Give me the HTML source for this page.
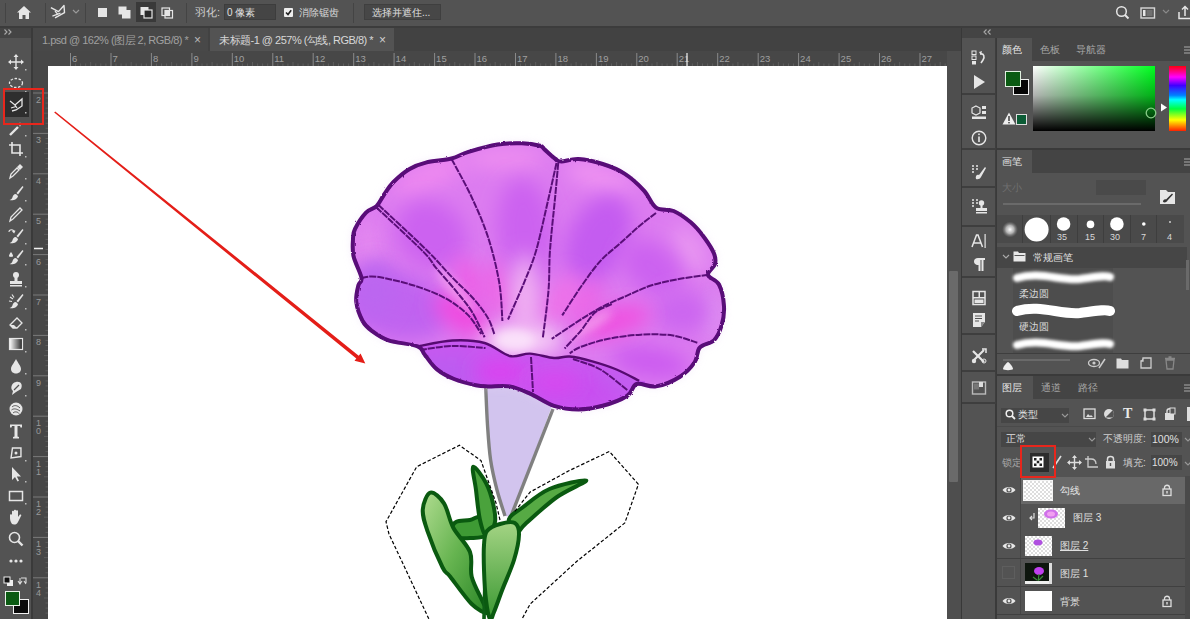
<!DOCTYPE html>
<html><head><meta charset="utf-8">
<style>
*{margin:0;padding:0;box-sizing:border-box}
html,body{width:1190px;height:619px;overflow:hidden;background:#535353;font-family:"Liberation Sans",sans-serif;color:#ddd}
.a{position:absolute}
svg{position:absolute;overflow:visible}
.t{position:absolute;white-space:nowrap;line-height:1}
</style></head><body>
<div class="a" style="left:0;top:0;width:1190px;height:26px;background:#535353"></div>
<div class="a" style="left:0;top:26px;width:1190px;height:2px;background:#3c3c3c"></div>
<div class="a" style="left:0;top:28px;width:32px;height:10px;background:#444"></div>
<div class="a" style="left:0;top:38px;width:32px;height:581px;background:#535353"></div>
<div class="a" style="left:31px;top:28px;width:2px;height:591px;background:#3a3a3a"></div>
<div class="a" style="left:33px;top:28px;width:928px;height:23px;background:#424242"></div>
<div class="a" style="left:33px;top:28px;width:175px;height:23px;background:#484848"></div>
<div class="a" style="left:210px;top:28px;width:184px;height:23px;background:#535353"></div>
<div class="t" style="left:42px;top:35px;font-size:11px;letter-spacing:-0.5px;color:#a0a0a0">1.psd @ 162% (图层 2, RGB/8) *</div>
<div class="t" style="left:194px;top:34px;font-size:12px;color:#b8b8b8">×</div>
<div class="t" style="left:219px;top:35px;font-size:11px;letter-spacing:-0.5px;color:#d8d8d8">未标题-1 @ 257% (勾线, RGB/8) *</div>
<div class="t" style="left:379px;top:34px;font-size:12px;color:#d0d0d0">×</div>
<div class="a" style="left:33px;top:51px;width:915px;height:15px;background:#474747"></div>
<div class="a" style="left:33px;top:66px;width:15px;height:553px;background:#474747"></div>
<svg style="left:0;top:0;width:1190px;height:619px" viewBox="0 0 1190 619">
<line x1="70.5" y1="53" x2="70.5" y2="66" stroke="#8a8a8a" stroke-width="1"/>
<text x="72.0" y="62" font-size="9.5" fill="#a0a0a0" font-family="Liberation Sans">6</text>
<line x1="75.6" y1="63.5" x2="75.6" y2="66" stroke="#5e5e5e" stroke-width="1"/>
<line x1="80.6" y1="63.5" x2="80.6" y2="66" stroke="#5e5e5e" stroke-width="1"/>
<line x1="85.7" y1="63.5" x2="85.7" y2="66" stroke="#5e5e5e" stroke-width="1"/>
<line x1="90.7" y1="62.0" x2="90.7" y2="66" stroke="#5e5e5e" stroke-width="1"/>
<line x1="95.8" y1="63.5" x2="95.8" y2="66" stroke="#5e5e5e" stroke-width="1"/>
<line x1="100.8" y1="63.5" x2="100.8" y2="66" stroke="#5e5e5e" stroke-width="1"/>
<line x1="105.9" y1="63.5" x2="105.9" y2="66" stroke="#5e5e5e" stroke-width="1"/>
<line x1="111.0" y1="53" x2="111.0" y2="66" stroke="#8a8a8a" stroke-width="1"/>
<text x="112.5" y="62" font-size="9.5" fill="#a0a0a0" font-family="Liberation Sans">7</text>
<line x1="116.0" y1="63.5" x2="116.0" y2="66" stroke="#5e5e5e" stroke-width="1"/>
<line x1="121.1" y1="63.5" x2="121.1" y2="66" stroke="#5e5e5e" stroke-width="1"/>
<line x1="126.1" y1="63.5" x2="126.1" y2="66" stroke="#5e5e5e" stroke-width="1"/>
<line x1="131.2" y1="62.0" x2="131.2" y2="66" stroke="#5e5e5e" stroke-width="1"/>
<line x1="136.2" y1="63.5" x2="136.2" y2="66" stroke="#5e5e5e" stroke-width="1"/>
<line x1="141.3" y1="63.5" x2="141.3" y2="66" stroke="#5e5e5e" stroke-width="1"/>
<line x1="146.3" y1="63.5" x2="146.3" y2="66" stroke="#5e5e5e" stroke-width="1"/>
<line x1="151.4" y1="53" x2="151.4" y2="66" stroke="#8a8a8a" stroke-width="1"/>
<text x="152.9" y="62" font-size="9.5" fill="#a0a0a0" font-family="Liberation Sans">8</text>
<line x1="156.5" y1="63.5" x2="156.5" y2="66" stroke="#5e5e5e" stroke-width="1"/>
<line x1="161.5" y1="63.5" x2="161.5" y2="66" stroke="#5e5e5e" stroke-width="1"/>
<line x1="166.6" y1="63.5" x2="166.6" y2="66" stroke="#5e5e5e" stroke-width="1"/>
<line x1="171.6" y1="62.0" x2="171.6" y2="66" stroke="#5e5e5e" stroke-width="1"/>
<line x1="176.7" y1="63.5" x2="176.7" y2="66" stroke="#5e5e5e" stroke-width="1"/>
<line x1="181.7" y1="63.5" x2="181.7" y2="66" stroke="#5e5e5e" stroke-width="1"/>
<line x1="186.8" y1="63.5" x2="186.8" y2="66" stroke="#5e5e5e" stroke-width="1"/>
<line x1="191.9" y1="53" x2="191.9" y2="66" stroke="#8a8a8a" stroke-width="1"/>
<text x="193.4" y="62" font-size="9.5" fill="#a0a0a0" font-family="Liberation Sans">9</text>
<line x1="196.9" y1="63.5" x2="196.9" y2="66" stroke="#5e5e5e" stroke-width="1"/>
<line x1="202.0" y1="63.5" x2="202.0" y2="66" stroke="#5e5e5e" stroke-width="1"/>
<line x1="207.0" y1="63.5" x2="207.0" y2="66" stroke="#5e5e5e" stroke-width="1"/>
<line x1="212.1" y1="62.0" x2="212.1" y2="66" stroke="#5e5e5e" stroke-width="1"/>
<line x1="217.1" y1="63.5" x2="217.1" y2="66" stroke="#5e5e5e" stroke-width="1"/>
<line x1="222.2" y1="63.5" x2="222.2" y2="66" stroke="#5e5e5e" stroke-width="1"/>
<line x1="227.2" y1="63.5" x2="227.2" y2="66" stroke="#5e5e5e" stroke-width="1"/>
<line x1="232.3" y1="53" x2="232.3" y2="66" stroke="#8a8a8a" stroke-width="1"/>
<text x="233.8" y="62" font-size="9.5" fill="#a0a0a0" font-family="Liberation Sans">10</text>
<line x1="237.4" y1="63.5" x2="237.4" y2="66" stroke="#5e5e5e" stroke-width="1"/>
<line x1="242.4" y1="63.5" x2="242.4" y2="66" stroke="#5e5e5e" stroke-width="1"/>
<line x1="247.5" y1="63.5" x2="247.5" y2="66" stroke="#5e5e5e" stroke-width="1"/>
<line x1="252.5" y1="62.0" x2="252.5" y2="66" stroke="#5e5e5e" stroke-width="1"/>
<line x1="257.6" y1="63.5" x2="257.6" y2="66" stroke="#5e5e5e" stroke-width="1"/>
<line x1="262.6" y1="63.5" x2="262.6" y2="66" stroke="#5e5e5e" stroke-width="1"/>
<line x1="267.7" y1="63.5" x2="267.7" y2="66" stroke="#5e5e5e" stroke-width="1"/>
<line x1="272.8" y1="53" x2="272.8" y2="66" stroke="#8a8a8a" stroke-width="1"/>
<text x="274.2" y="62" font-size="9.5" fill="#a0a0a0" font-family="Liberation Sans">11</text>
<line x1="277.8" y1="63.5" x2="277.8" y2="66" stroke="#5e5e5e" stroke-width="1"/>
<line x1="282.9" y1="63.5" x2="282.9" y2="66" stroke="#5e5e5e" stroke-width="1"/>
<line x1="287.9" y1="63.5" x2="287.9" y2="66" stroke="#5e5e5e" stroke-width="1"/>
<line x1="293.0" y1="62.0" x2="293.0" y2="66" stroke="#5e5e5e" stroke-width="1"/>
<line x1="298.0" y1="63.5" x2="298.0" y2="66" stroke="#5e5e5e" stroke-width="1"/>
<line x1="303.1" y1="63.5" x2="303.1" y2="66" stroke="#5e5e5e" stroke-width="1"/>
<line x1="308.1" y1="63.5" x2="308.1" y2="66" stroke="#5e5e5e" stroke-width="1"/>
<line x1="313.2" y1="53" x2="313.2" y2="66" stroke="#8a8a8a" stroke-width="1"/>
<text x="314.7" y="62" font-size="9.5" fill="#a0a0a0" font-family="Liberation Sans">12</text>
<line x1="318.3" y1="63.5" x2="318.3" y2="66" stroke="#5e5e5e" stroke-width="1"/>
<line x1="323.3" y1="63.5" x2="323.3" y2="66" stroke="#5e5e5e" stroke-width="1"/>
<line x1="328.4" y1="63.5" x2="328.4" y2="66" stroke="#5e5e5e" stroke-width="1"/>
<line x1="333.4" y1="62.0" x2="333.4" y2="66" stroke="#5e5e5e" stroke-width="1"/>
<line x1="338.5" y1="63.5" x2="338.5" y2="66" stroke="#5e5e5e" stroke-width="1"/>
<line x1="343.5" y1="63.5" x2="343.5" y2="66" stroke="#5e5e5e" stroke-width="1"/>
<line x1="348.6" y1="63.5" x2="348.6" y2="66" stroke="#5e5e5e" stroke-width="1"/>
<line x1="353.7" y1="53" x2="353.7" y2="66" stroke="#8a8a8a" stroke-width="1"/>
<text x="355.2" y="62" font-size="9.5" fill="#a0a0a0" font-family="Liberation Sans">13</text>
<line x1="358.7" y1="63.5" x2="358.7" y2="66" stroke="#5e5e5e" stroke-width="1"/>
<line x1="363.8" y1="63.5" x2="363.8" y2="66" stroke="#5e5e5e" stroke-width="1"/>
<line x1="368.8" y1="63.5" x2="368.8" y2="66" stroke="#5e5e5e" stroke-width="1"/>
<line x1="373.9" y1="62.0" x2="373.9" y2="66" stroke="#5e5e5e" stroke-width="1"/>
<line x1="378.9" y1="63.5" x2="378.9" y2="66" stroke="#5e5e5e" stroke-width="1"/>
<line x1="384.0" y1="63.5" x2="384.0" y2="66" stroke="#5e5e5e" stroke-width="1"/>
<line x1="389.0" y1="63.5" x2="389.0" y2="66" stroke="#5e5e5e" stroke-width="1"/>
<line x1="394.1" y1="53" x2="394.1" y2="66" stroke="#8a8a8a" stroke-width="1"/>
<text x="395.6" y="62" font-size="9.5" fill="#a0a0a0" font-family="Liberation Sans">14</text>
<line x1="399.2" y1="63.5" x2="399.2" y2="66" stroke="#5e5e5e" stroke-width="1"/>
<line x1="404.2" y1="63.5" x2="404.2" y2="66" stroke="#5e5e5e" stroke-width="1"/>
<line x1="409.3" y1="63.5" x2="409.3" y2="66" stroke="#5e5e5e" stroke-width="1"/>
<line x1="414.3" y1="62.0" x2="414.3" y2="66" stroke="#5e5e5e" stroke-width="1"/>
<line x1="419.4" y1="63.5" x2="419.4" y2="66" stroke="#5e5e5e" stroke-width="1"/>
<line x1="424.4" y1="63.5" x2="424.4" y2="66" stroke="#5e5e5e" stroke-width="1"/>
<line x1="429.5" y1="63.5" x2="429.5" y2="66" stroke="#5e5e5e" stroke-width="1"/>
<line x1="434.6" y1="53" x2="434.6" y2="66" stroke="#8a8a8a" stroke-width="1"/>
<text x="436.1" y="62" font-size="9.5" fill="#a0a0a0" font-family="Liberation Sans">15</text>
<line x1="439.6" y1="63.5" x2="439.6" y2="66" stroke="#5e5e5e" stroke-width="1"/>
<line x1="444.7" y1="63.5" x2="444.7" y2="66" stroke="#5e5e5e" stroke-width="1"/>
<line x1="449.7" y1="63.5" x2="449.7" y2="66" stroke="#5e5e5e" stroke-width="1"/>
<line x1="454.8" y1="62.0" x2="454.8" y2="66" stroke="#5e5e5e" stroke-width="1"/>
<line x1="459.8" y1="63.5" x2="459.8" y2="66" stroke="#5e5e5e" stroke-width="1"/>
<line x1="464.9" y1="63.5" x2="464.9" y2="66" stroke="#5e5e5e" stroke-width="1"/>
<line x1="469.9" y1="63.5" x2="469.9" y2="66" stroke="#5e5e5e" stroke-width="1"/>
<line x1="475.0" y1="53" x2="475.0" y2="66" stroke="#8a8a8a" stroke-width="1"/>
<text x="476.5" y="62" font-size="9.5" fill="#a0a0a0" font-family="Liberation Sans">16</text>
<line x1="480.1" y1="63.5" x2="480.1" y2="66" stroke="#5e5e5e" stroke-width="1"/>
<line x1="485.1" y1="63.5" x2="485.1" y2="66" stroke="#5e5e5e" stroke-width="1"/>
<line x1="490.2" y1="63.5" x2="490.2" y2="66" stroke="#5e5e5e" stroke-width="1"/>
<line x1="495.2" y1="62.0" x2="495.2" y2="66" stroke="#5e5e5e" stroke-width="1"/>
<line x1="500.3" y1="63.5" x2="500.3" y2="66" stroke="#5e5e5e" stroke-width="1"/>
<line x1="505.3" y1="63.5" x2="505.3" y2="66" stroke="#5e5e5e" stroke-width="1"/>
<line x1="510.4" y1="63.5" x2="510.4" y2="66" stroke="#5e5e5e" stroke-width="1"/>
<line x1="515.5" y1="53" x2="515.5" y2="66" stroke="#8a8a8a" stroke-width="1"/>
<text x="517.0" y="62" font-size="9.5" fill="#a0a0a0" font-family="Liberation Sans">17</text>
<line x1="520.5" y1="63.5" x2="520.5" y2="66" stroke="#5e5e5e" stroke-width="1"/>
<line x1="525.6" y1="63.5" x2="525.6" y2="66" stroke="#5e5e5e" stroke-width="1"/>
<line x1="530.6" y1="63.5" x2="530.6" y2="66" stroke="#5e5e5e" stroke-width="1"/>
<line x1="535.7" y1="62.0" x2="535.7" y2="66" stroke="#5e5e5e" stroke-width="1"/>
<line x1="540.7" y1="63.5" x2="540.7" y2="66" stroke="#5e5e5e" stroke-width="1"/>
<line x1="545.8" y1="63.5" x2="545.8" y2="66" stroke="#5e5e5e" stroke-width="1"/>
<line x1="550.8" y1="63.5" x2="550.8" y2="66" stroke="#5e5e5e" stroke-width="1"/>
<line x1="555.9" y1="53" x2="555.9" y2="66" stroke="#8a8a8a" stroke-width="1"/>
<text x="557.4" y="62" font-size="9.5" fill="#a0a0a0" font-family="Liberation Sans">18</text>
<line x1="561.0" y1="63.5" x2="561.0" y2="66" stroke="#5e5e5e" stroke-width="1"/>
<line x1="566.0" y1="63.5" x2="566.0" y2="66" stroke="#5e5e5e" stroke-width="1"/>
<line x1="571.1" y1="63.5" x2="571.1" y2="66" stroke="#5e5e5e" stroke-width="1"/>
<line x1="576.1" y1="62.0" x2="576.1" y2="66" stroke="#5e5e5e" stroke-width="1"/>
<line x1="581.2" y1="63.5" x2="581.2" y2="66" stroke="#5e5e5e" stroke-width="1"/>
<line x1="586.2" y1="63.5" x2="586.2" y2="66" stroke="#5e5e5e" stroke-width="1"/>
<line x1="591.3" y1="63.5" x2="591.3" y2="66" stroke="#5e5e5e" stroke-width="1"/>
<line x1="596.4" y1="53" x2="596.4" y2="66" stroke="#8a8a8a" stroke-width="1"/>
<text x="597.9" y="62" font-size="9.5" fill="#a0a0a0" font-family="Liberation Sans">19</text>
<line x1="601.4" y1="63.5" x2="601.4" y2="66" stroke="#5e5e5e" stroke-width="1"/>
<line x1="606.5" y1="63.5" x2="606.5" y2="66" stroke="#5e5e5e" stroke-width="1"/>
<line x1="611.5" y1="63.5" x2="611.5" y2="66" stroke="#5e5e5e" stroke-width="1"/>
<line x1="616.6" y1="62.0" x2="616.6" y2="66" stroke="#5e5e5e" stroke-width="1"/>
<line x1="621.6" y1="63.5" x2="621.6" y2="66" stroke="#5e5e5e" stroke-width="1"/>
<line x1="626.7" y1="63.5" x2="626.7" y2="66" stroke="#5e5e5e" stroke-width="1"/>
<line x1="631.7" y1="63.5" x2="631.7" y2="66" stroke="#5e5e5e" stroke-width="1"/>
<line x1="636.8" y1="53" x2="636.8" y2="66" stroke="#8a8a8a" stroke-width="1"/>
<text x="638.3" y="62" font-size="9.5" fill="#a0a0a0" font-family="Liberation Sans">20</text>
<line x1="641.9" y1="63.5" x2="641.9" y2="66" stroke="#5e5e5e" stroke-width="1"/>
<line x1="646.9" y1="63.5" x2="646.9" y2="66" stroke="#5e5e5e" stroke-width="1"/>
<line x1="652.0" y1="63.5" x2="652.0" y2="66" stroke="#5e5e5e" stroke-width="1"/>
<line x1="657.0" y1="62.0" x2="657.0" y2="66" stroke="#5e5e5e" stroke-width="1"/>
<line x1="662.1" y1="63.5" x2="662.1" y2="66" stroke="#5e5e5e" stroke-width="1"/>
<line x1="667.1" y1="63.5" x2="667.1" y2="66" stroke="#5e5e5e" stroke-width="1"/>
<line x1="672.2" y1="63.5" x2="672.2" y2="66" stroke="#5e5e5e" stroke-width="1"/>
<line x1="677.2" y1="53" x2="677.2" y2="66" stroke="#8a8a8a" stroke-width="1"/>
<text x="678.8" y="62" font-size="9.5" fill="#a0a0a0" font-family="Liberation Sans">21</text>
<line x1="682.3" y1="63.5" x2="682.3" y2="66" stroke="#5e5e5e" stroke-width="1"/>
<line x1="687.4" y1="63.5" x2="687.4" y2="66" stroke="#5e5e5e" stroke-width="1"/>
<line x1="692.4" y1="63.5" x2="692.4" y2="66" stroke="#5e5e5e" stroke-width="1"/>
<line x1="697.5" y1="62.0" x2="697.5" y2="66" stroke="#5e5e5e" stroke-width="1"/>
<line x1="702.5" y1="63.5" x2="702.5" y2="66" stroke="#5e5e5e" stroke-width="1"/>
<line x1="707.6" y1="63.5" x2="707.6" y2="66" stroke="#5e5e5e" stroke-width="1"/>
<line x1="712.6" y1="63.5" x2="712.6" y2="66" stroke="#5e5e5e" stroke-width="1"/>
<line x1="717.7" y1="53" x2="717.7" y2="66" stroke="#8a8a8a" stroke-width="1"/>
<text x="719.2" y="62" font-size="9.5" fill="#a0a0a0" font-family="Liberation Sans">22</text>
<line x1="722.8" y1="63.5" x2="722.8" y2="66" stroke="#5e5e5e" stroke-width="1"/>
<line x1="727.8" y1="63.5" x2="727.8" y2="66" stroke="#5e5e5e" stroke-width="1"/>
<line x1="732.9" y1="63.5" x2="732.9" y2="66" stroke="#5e5e5e" stroke-width="1"/>
<line x1="737.9" y1="62.0" x2="737.9" y2="66" stroke="#5e5e5e" stroke-width="1"/>
<line x1="743.0" y1="63.5" x2="743.0" y2="66" stroke="#5e5e5e" stroke-width="1"/>
<line x1="748.0" y1="63.5" x2="748.0" y2="66" stroke="#5e5e5e" stroke-width="1"/>
<line x1="753.1" y1="63.5" x2="753.1" y2="66" stroke="#5e5e5e" stroke-width="1"/>
<line x1="758.2" y1="53" x2="758.2" y2="66" stroke="#8a8a8a" stroke-width="1"/>
<text x="759.7" y="62" font-size="9.5" fill="#a0a0a0" font-family="Liberation Sans">23</text>
<line x1="763.2" y1="63.5" x2="763.2" y2="66" stroke="#5e5e5e" stroke-width="1"/>
<line x1="768.3" y1="63.5" x2="768.3" y2="66" stroke="#5e5e5e" stroke-width="1"/>
<line x1="773.3" y1="63.5" x2="773.3" y2="66" stroke="#5e5e5e" stroke-width="1"/>
<line x1="778.4" y1="62.0" x2="778.4" y2="66" stroke="#5e5e5e" stroke-width="1"/>
<line x1="783.4" y1="63.5" x2="783.4" y2="66" stroke="#5e5e5e" stroke-width="1"/>
<line x1="788.5" y1="63.5" x2="788.5" y2="66" stroke="#5e5e5e" stroke-width="1"/>
<line x1="793.5" y1="63.5" x2="793.5" y2="66" stroke="#5e5e5e" stroke-width="1"/>
<line x1="798.6" y1="53" x2="798.6" y2="66" stroke="#8a8a8a" stroke-width="1"/>
<text x="800.1" y="62" font-size="9.5" fill="#a0a0a0" font-family="Liberation Sans">24</text>
<line x1="803.7" y1="63.5" x2="803.7" y2="66" stroke="#5e5e5e" stroke-width="1"/>
<line x1="808.7" y1="63.5" x2="808.7" y2="66" stroke="#5e5e5e" stroke-width="1"/>
<line x1="813.8" y1="63.5" x2="813.8" y2="66" stroke="#5e5e5e" stroke-width="1"/>
<line x1="818.8" y1="62.0" x2="818.8" y2="66" stroke="#5e5e5e" stroke-width="1"/>
<line x1="823.9" y1="63.5" x2="823.9" y2="66" stroke="#5e5e5e" stroke-width="1"/>
<line x1="828.9" y1="63.5" x2="828.9" y2="66" stroke="#5e5e5e" stroke-width="1"/>
<line x1="834.0" y1="63.5" x2="834.0" y2="66" stroke="#5e5e5e" stroke-width="1"/>
<line x1="839.1" y1="53" x2="839.1" y2="66" stroke="#8a8a8a" stroke-width="1"/>
<text x="840.6" y="62" font-size="9.5" fill="#a0a0a0" font-family="Liberation Sans">25</text>
<line x1="844.1" y1="63.5" x2="844.1" y2="66" stroke="#5e5e5e" stroke-width="1"/>
<line x1="849.2" y1="63.5" x2="849.2" y2="66" stroke="#5e5e5e" stroke-width="1"/>
<line x1="854.2" y1="63.5" x2="854.2" y2="66" stroke="#5e5e5e" stroke-width="1"/>
<line x1="859.3" y1="62.0" x2="859.3" y2="66" stroke="#5e5e5e" stroke-width="1"/>
<line x1="864.3" y1="63.5" x2="864.3" y2="66" stroke="#5e5e5e" stroke-width="1"/>
<line x1="869.4" y1="63.5" x2="869.4" y2="66" stroke="#5e5e5e" stroke-width="1"/>
<line x1="874.4" y1="63.5" x2="874.4" y2="66" stroke="#5e5e5e" stroke-width="1"/>
<line x1="879.5" y1="53" x2="879.5" y2="66" stroke="#8a8a8a" stroke-width="1"/>
<text x="881.0" y="62" font-size="9.5" fill="#a0a0a0" font-family="Liberation Sans">26</text>
<line x1="884.6" y1="63.5" x2="884.6" y2="66" stroke="#5e5e5e" stroke-width="1"/>
<line x1="889.6" y1="63.5" x2="889.6" y2="66" stroke="#5e5e5e" stroke-width="1"/>
<line x1="894.7" y1="63.5" x2="894.7" y2="66" stroke="#5e5e5e" stroke-width="1"/>
<line x1="899.7" y1="62.0" x2="899.7" y2="66" stroke="#5e5e5e" stroke-width="1"/>
<line x1="904.8" y1="63.5" x2="904.8" y2="66" stroke="#5e5e5e" stroke-width="1"/>
<line x1="909.8" y1="63.5" x2="909.8" y2="66" stroke="#5e5e5e" stroke-width="1"/>
<line x1="914.9" y1="63.5" x2="914.9" y2="66" stroke="#5e5e5e" stroke-width="1"/>
<line x1="920.0" y1="53" x2="920.0" y2="66" stroke="#8a8a8a" stroke-width="1"/>
<text x="921.5" y="62" font-size="9.5" fill="#a0a0a0" font-family="Liberation Sans">27</text>
<line x1="925.0" y1="63.5" x2="925.0" y2="66" stroke="#5e5e5e" stroke-width="1"/>
<line x1="930.1" y1="63.5" x2="930.1" y2="66" stroke="#5e5e5e" stroke-width="1"/>
<line x1="935.1" y1="63.5" x2="935.1" y2="66" stroke="#5e5e5e" stroke-width="1"/>
<line x1="940.2" y1="62.0" x2="940.2" y2="66" stroke="#5e5e5e" stroke-width="1"/>
<line x1="945.2" y1="63.5" x2="945.2" y2="66" stroke="#5e5e5e" stroke-width="1"/>
<line x1="33" y1="93.0" x2="48" y2="93.0" stroke="#7a7a7a" stroke-width="1"/>
<text x="36" y="103.0" font-size="9" fill="#9a9a9a" font-family="Liberation Sans">2</text>
<line x1="45.5" y1="98.0" x2="48" y2="98.0" stroke="#5e5e5e" stroke-width="1"/>
<line x1="45.5" y1="103.1" x2="48" y2="103.1" stroke="#5e5e5e" stroke-width="1"/>
<line x1="45.5" y1="108.2" x2="48" y2="108.2" stroke="#5e5e5e" stroke-width="1"/>
<line x1="44.0" y1="113.2" x2="48" y2="113.2" stroke="#5e5e5e" stroke-width="1"/>
<line x1="45.5" y1="118.2" x2="48" y2="118.2" stroke="#5e5e5e" stroke-width="1"/>
<line x1="45.5" y1="123.3" x2="48" y2="123.3" stroke="#5e5e5e" stroke-width="1"/>
<line x1="45.5" y1="128.3" x2="48" y2="128.3" stroke="#5e5e5e" stroke-width="1"/>
<line x1="33" y1="133.4" x2="48" y2="133.4" stroke="#7a7a7a" stroke-width="1"/>
<text x="36" y="143.4" font-size="9" fill="#9a9a9a" font-family="Liberation Sans">3</text>
<line x1="45.5" y1="138.5" x2="48" y2="138.5" stroke="#5e5e5e" stroke-width="1"/>
<line x1="45.5" y1="143.5" x2="48" y2="143.5" stroke="#5e5e5e" stroke-width="1"/>
<line x1="45.5" y1="148.6" x2="48" y2="148.6" stroke="#5e5e5e" stroke-width="1"/>
<line x1="44.0" y1="153.6" x2="48" y2="153.6" stroke="#5e5e5e" stroke-width="1"/>
<line x1="45.5" y1="158.7" x2="48" y2="158.7" stroke="#5e5e5e" stroke-width="1"/>
<line x1="45.5" y1="163.7" x2="48" y2="163.7" stroke="#5e5e5e" stroke-width="1"/>
<line x1="45.5" y1="168.8" x2="48" y2="168.8" stroke="#5e5e5e" stroke-width="1"/>
<line x1="33" y1="173.8" x2="48" y2="173.8" stroke="#7a7a7a" stroke-width="1"/>
<text x="36" y="183.8" font-size="9" fill="#9a9a9a" font-family="Liberation Sans">4</text>
<line x1="45.5" y1="178.9" x2="48" y2="178.9" stroke="#5e5e5e" stroke-width="1"/>
<line x1="45.5" y1="183.9" x2="48" y2="183.9" stroke="#5e5e5e" stroke-width="1"/>
<line x1="45.5" y1="189.0" x2="48" y2="189.0" stroke="#5e5e5e" stroke-width="1"/>
<line x1="44.0" y1="194.0" x2="48" y2="194.0" stroke="#5e5e5e" stroke-width="1"/>
<line x1="45.5" y1="199.1" x2="48" y2="199.1" stroke="#5e5e5e" stroke-width="1"/>
<line x1="45.5" y1="204.1" x2="48" y2="204.1" stroke="#5e5e5e" stroke-width="1"/>
<line x1="45.5" y1="209.2" x2="48" y2="209.2" stroke="#5e5e5e" stroke-width="1"/>
<line x1="33" y1="214.2" x2="48" y2="214.2" stroke="#7a7a7a" stroke-width="1"/>
<text x="36" y="224.2" font-size="9" fill="#9a9a9a" font-family="Liberation Sans">5</text>
<line x1="45.5" y1="219.2" x2="48" y2="219.2" stroke="#5e5e5e" stroke-width="1"/>
<line x1="45.5" y1="224.3" x2="48" y2="224.3" stroke="#5e5e5e" stroke-width="1"/>
<line x1="45.5" y1="229.3" x2="48" y2="229.3" stroke="#5e5e5e" stroke-width="1"/>
<line x1="44.0" y1="234.4" x2="48" y2="234.4" stroke="#5e5e5e" stroke-width="1"/>
<line x1="45.5" y1="239.4" x2="48" y2="239.4" stroke="#5e5e5e" stroke-width="1"/>
<line x1="45.5" y1="244.5" x2="48" y2="244.5" stroke="#5e5e5e" stroke-width="1"/>
<line x1="45.5" y1="249.5" x2="48" y2="249.5" stroke="#5e5e5e" stroke-width="1"/>
<line x1="33" y1="254.6" x2="48" y2="254.6" stroke="#7a7a7a" stroke-width="1"/>
<text x="36" y="264.6" font-size="9" fill="#9a9a9a" font-family="Liberation Sans">6</text>
<line x1="45.5" y1="259.6" x2="48" y2="259.6" stroke="#5e5e5e" stroke-width="1"/>
<line x1="45.5" y1="264.7" x2="48" y2="264.7" stroke="#5e5e5e" stroke-width="1"/>
<line x1="45.5" y1="269.8" x2="48" y2="269.8" stroke="#5e5e5e" stroke-width="1"/>
<line x1="44.0" y1="274.8" x2="48" y2="274.8" stroke="#5e5e5e" stroke-width="1"/>
<line x1="45.5" y1="279.9" x2="48" y2="279.9" stroke="#5e5e5e" stroke-width="1"/>
<line x1="45.5" y1="284.9" x2="48" y2="284.9" stroke="#5e5e5e" stroke-width="1"/>
<line x1="45.5" y1="289.9" x2="48" y2="289.9" stroke="#5e5e5e" stroke-width="1"/>
<line x1="33" y1="295.0" x2="48" y2="295.0" stroke="#7a7a7a" stroke-width="1"/>
<text x="36" y="305.0" font-size="9" fill="#9a9a9a" font-family="Liberation Sans">7</text>
<line x1="45.5" y1="300.1" x2="48" y2="300.1" stroke="#5e5e5e" stroke-width="1"/>
<line x1="45.5" y1="305.1" x2="48" y2="305.1" stroke="#5e5e5e" stroke-width="1"/>
<line x1="45.5" y1="310.1" x2="48" y2="310.1" stroke="#5e5e5e" stroke-width="1"/>
<line x1="44.0" y1="315.2" x2="48" y2="315.2" stroke="#5e5e5e" stroke-width="1"/>
<line x1="45.5" y1="320.2" x2="48" y2="320.2" stroke="#5e5e5e" stroke-width="1"/>
<line x1="45.5" y1="325.3" x2="48" y2="325.3" stroke="#5e5e5e" stroke-width="1"/>
<line x1="45.5" y1="330.4" x2="48" y2="330.4" stroke="#5e5e5e" stroke-width="1"/>
<line x1="33" y1="335.4" x2="48" y2="335.4" stroke="#7a7a7a" stroke-width="1"/>
<text x="36" y="345.4" font-size="9" fill="#9a9a9a" font-family="Liberation Sans">8</text>
<line x1="45.5" y1="340.4" x2="48" y2="340.4" stroke="#5e5e5e" stroke-width="1"/>
<line x1="45.5" y1="345.5" x2="48" y2="345.5" stroke="#5e5e5e" stroke-width="1"/>
<line x1="45.5" y1="350.5" x2="48" y2="350.5" stroke="#5e5e5e" stroke-width="1"/>
<line x1="44.0" y1="355.6" x2="48" y2="355.6" stroke="#5e5e5e" stroke-width="1"/>
<line x1="45.5" y1="360.6" x2="48" y2="360.6" stroke="#5e5e5e" stroke-width="1"/>
<line x1="45.5" y1="365.7" x2="48" y2="365.7" stroke="#5e5e5e" stroke-width="1"/>
<line x1="45.5" y1="370.8" x2="48" y2="370.8" stroke="#5e5e5e" stroke-width="1"/>
<line x1="33" y1="375.8" x2="48" y2="375.8" stroke="#7a7a7a" stroke-width="1"/>
<text x="36" y="385.8" font-size="9" fill="#9a9a9a" font-family="Liberation Sans">9</text>
<line x1="45.5" y1="380.9" x2="48" y2="380.9" stroke="#5e5e5e" stroke-width="1"/>
<line x1="45.5" y1="385.9" x2="48" y2="385.9" stroke="#5e5e5e" stroke-width="1"/>
<line x1="45.5" y1="390.9" x2="48" y2="390.9" stroke="#5e5e5e" stroke-width="1"/>
<line x1="44.0" y1="396.0" x2="48" y2="396.0" stroke="#5e5e5e" stroke-width="1"/>
<line x1="45.5" y1="401.1" x2="48" y2="401.1" stroke="#5e5e5e" stroke-width="1"/>
<line x1="45.5" y1="406.1" x2="48" y2="406.1" stroke="#5e5e5e" stroke-width="1"/>
<line x1="45.5" y1="411.2" x2="48" y2="411.2" stroke="#5e5e5e" stroke-width="1"/>
<line x1="33" y1="416.2" x2="48" y2="416.2" stroke="#7a7a7a" stroke-width="1"/>
<text x="36" y="426.2" font-size="9" fill="#9a9a9a" font-family="Liberation Sans">1</text>
<text x="36" y="434.2" font-size="9" fill="#9a9a9a" font-family="Liberation Sans">0</text>
<line x1="45.5" y1="421.2" x2="48" y2="421.2" stroke="#5e5e5e" stroke-width="1"/>
<line x1="45.5" y1="426.3" x2="48" y2="426.3" stroke="#5e5e5e" stroke-width="1"/>
<line x1="45.5" y1="431.3" x2="48" y2="431.3" stroke="#5e5e5e" stroke-width="1"/>
<line x1="44.0" y1="436.4" x2="48" y2="436.4" stroke="#5e5e5e" stroke-width="1"/>
<line x1="45.5" y1="441.4" x2="48" y2="441.4" stroke="#5e5e5e" stroke-width="1"/>
<line x1="45.5" y1="446.5" x2="48" y2="446.5" stroke="#5e5e5e" stroke-width="1"/>
<line x1="45.5" y1="451.6" x2="48" y2="451.6" stroke="#5e5e5e" stroke-width="1"/>
<line x1="33" y1="456.6" x2="48" y2="456.6" stroke="#7a7a7a" stroke-width="1"/>
<text x="36" y="466.6" font-size="9" fill="#9a9a9a" font-family="Liberation Sans">1</text>
<text x="36" y="474.6" font-size="9" fill="#9a9a9a" font-family="Liberation Sans">1</text>
<line x1="45.5" y1="461.6" x2="48" y2="461.6" stroke="#5e5e5e" stroke-width="1"/>
<line x1="45.5" y1="466.7" x2="48" y2="466.7" stroke="#5e5e5e" stroke-width="1"/>
<line x1="45.5" y1="471.7" x2="48" y2="471.7" stroke="#5e5e5e" stroke-width="1"/>
<line x1="44.0" y1="476.8" x2="48" y2="476.8" stroke="#5e5e5e" stroke-width="1"/>
<line x1="45.5" y1="481.8" x2="48" y2="481.8" stroke="#5e5e5e" stroke-width="1"/>
<line x1="45.5" y1="486.9" x2="48" y2="486.9" stroke="#5e5e5e" stroke-width="1"/>
<line x1="45.5" y1="491.9" x2="48" y2="491.9" stroke="#5e5e5e" stroke-width="1"/>
<line x1="33" y1="497.0" x2="48" y2="497.0" stroke="#7a7a7a" stroke-width="1"/>
<text x="36" y="507.0" font-size="9" fill="#9a9a9a" font-family="Liberation Sans">1</text>
<text x="36" y="515.0" font-size="9" fill="#9a9a9a" font-family="Liberation Sans">2</text>
<line x1="45.5" y1="502.1" x2="48" y2="502.1" stroke="#5e5e5e" stroke-width="1"/>
<line x1="45.5" y1="507.1" x2="48" y2="507.1" stroke="#5e5e5e" stroke-width="1"/>
<line x1="45.5" y1="512.1" x2="48" y2="512.1" stroke="#5e5e5e" stroke-width="1"/>
<line x1="44.0" y1="517.2" x2="48" y2="517.2" stroke="#5e5e5e" stroke-width="1"/>
<line x1="45.5" y1="522.2" x2="48" y2="522.2" stroke="#5e5e5e" stroke-width="1"/>
<line x1="45.5" y1="527.3" x2="48" y2="527.3" stroke="#5e5e5e" stroke-width="1"/>
<line x1="45.5" y1="532.4" x2="48" y2="532.4" stroke="#5e5e5e" stroke-width="1"/>
<line x1="33" y1="537.4" x2="48" y2="537.4" stroke="#7a7a7a" stroke-width="1"/>
<text x="36" y="547.4" font-size="9" fill="#9a9a9a" font-family="Liberation Sans">1</text>
<text x="36" y="555.4" font-size="9" fill="#9a9a9a" font-family="Liberation Sans">3</text>
<line x1="45.5" y1="542.4" x2="48" y2="542.4" stroke="#5e5e5e" stroke-width="1"/>
<line x1="45.5" y1="547.5" x2="48" y2="547.5" stroke="#5e5e5e" stroke-width="1"/>
<line x1="45.5" y1="552.5" x2="48" y2="552.5" stroke="#5e5e5e" stroke-width="1"/>
<line x1="44.0" y1="557.6" x2="48" y2="557.6" stroke="#5e5e5e" stroke-width="1"/>
<line x1="45.5" y1="562.6" x2="48" y2="562.6" stroke="#5e5e5e" stroke-width="1"/>
<line x1="45.5" y1="567.7" x2="48" y2="567.7" stroke="#5e5e5e" stroke-width="1"/>
<line x1="45.5" y1="572.8" x2="48" y2="572.8" stroke="#5e5e5e" stroke-width="1"/>
<line x1="33" y1="577.8" x2="48" y2="577.8" stroke="#7a7a7a" stroke-width="1"/>
<text x="36" y="587.8" font-size="9" fill="#9a9a9a" font-family="Liberation Sans">1</text>
<text x="36" y="595.8" font-size="9" fill="#9a9a9a" font-family="Liberation Sans">4</text>
<line x1="45.5" y1="582.8" x2="48" y2="582.8" stroke="#5e5e5e" stroke-width="1"/>
<line x1="45.5" y1="587.9" x2="48" y2="587.9" stroke="#5e5e5e" stroke-width="1"/>
<line x1="45.5" y1="592.9" x2="48" y2="592.9" stroke="#5e5e5e" stroke-width="1"/>
<line x1="44.0" y1="598.0" x2="48" y2="598.0" stroke="#5e5e5e" stroke-width="1"/>
<line x1="45.5" y1="603.0" x2="48" y2="603.0" stroke="#5e5e5e" stroke-width="1"/>
<line x1="45.5" y1="608.1" x2="48" y2="608.1" stroke="#5e5e5e" stroke-width="1"/>
<line x1="45.5" y1="613.1" x2="48" y2="613.1" stroke="#5e5e5e" stroke-width="1"/>
<line x1="687" y1="53" x2="687" y2="66" stroke="#f0f0f0" stroke-width="1.2"/>
<line x1="34" y1="248.5" x2="43" y2="248.5" stroke="#f0f0f0" stroke-width="1.5"/>
</svg>
<div class="a" style="left:48px;top:66px;width:899px;height:553px;background:#fff"></div>
<div class="a" style="left:947px;top:51px;width:14px;height:568px;background:#4e4e4e"></div>
<div class="a" style="left:949px;top:271px;width:9px;height:211px;background:#6a6a6a;border-radius:1px"></div>
<div class="a" style="left:961px;top:28px;width:1px;height:591px;background:#383838"></div>
<div class="a" style="left:962px;top:28px;width:228px;height:10px;background:#444"></div>
<div class="a" style="left:962px;top:38px;width:34px;height:581px;background:#535353"></div>
<div class="a" style="left:995px;top:38px;width:2px;height:581px;background:#3a3a3a"></div>
<div class="a" style="left:997px;top:38px;width:193px;height:581px;background:#535353"></div><div class="a" style="left:5px;top:3px;width:1px;height:20px;background:#444;"></div>
<div class="a" style="left:45px;top:3px;width:1px;height:20px;background:#444;"></div>
<div class="a" style="left:85px;top:3px;width:1px;height:20px;background:#444;"></div>
<div class="a" style="left:186px;top:3px;width:1px;height:20px;background:#444;"></div>
<div class="a" style="left:353px;top:3px;width:1px;height:20px;background:#444;"></div>
<svg style="left:17px;top:6px;width:14px;height:13px" viewBox="0 0 14 13"><path d="M7 0 L14 6.5 L12 6.5 L12 13 L8.5 13 L8.5 9 L5.5 9 L5.5 13 L2 13 L2 6.5 L0 6.5 Z" fill="#e6e6e6"/></svg>
<svg style="left:50px;top:4px;width:16px;height:16px" viewBox="0 0 16 16"><path d="M0.9 3.6 L8.5 7.6 L14 1.5 L14.5 8.6 L5 13.8" fill="none" stroke="#e6e6e6" stroke-width="1.4" stroke-linejoin="round"/><path d="M2.4 12.1 L10.5 9.1 M5 7 L7.5 10" stroke="#e6e6e6" stroke-width="1.2"/></svg>
<svg style="left:72px;top:9px;width:8px;height:6px" viewBox="0 0 8 6"><path d="M1 1 L4 4 L7 1" fill="none" stroke="#9a9a9a" stroke-width="1.2"/></svg>
<div class="a" style="left:98px;top:8px;width:9px;height:9px;background:#e6e6e6;"></div>
<svg style="left:118px;top:6px;width:13px;height:13px" viewBox="0 0 13 13"><rect x="0.5" y="0.5" width="8" height="8" fill="#e6e6e6"/><rect x="4" y="4" width="8.5" height="8.5" fill="#e6e6e6"/></svg>
<div class="a" style="left:136px;top:2px;width:20px;height:20px;background:#393939;"></div>
<svg style="left:140px;top:7px;width:13px;height:12px" viewBox="0 0 13 12"><rect x="0.5" y="0" width="8" height="8" fill="#e6e6e6"/><rect x="4" y="3" width="8" height="8" fill="#2a2a2a" stroke="#e6e6e6" stroke-width="1.2"/></svg>
<svg style="left:161px;top:7px;width:13px;height:12px" viewBox="0 0 13 12"><rect x="1" y="1" width="7.5" height="7.5" fill="none" stroke="#e6e6e6" stroke-width="1.2"/><rect x="4" y="3.5" width="7.5" height="7.5" fill="none" stroke="#e6e6e6" stroke-width="1.2"/><rect x="4" y="3.5" width="4.5" height="5" fill="#e6e6e6"/></svg>
<div class="t" style="left:195px;top:7px;font-size:11px;color:#d0d0d0;">羽化:</div>
<div class="a" style="left:224px;top:4px;width:52px;height:16px;background:#454545;border:1px solid #3d3d3d"></div>
<div class="t" style="left:227px;top:8px;font-size:10px;color:#e0e0e0;">0 像素</div>
<div class="a" style="left:284px;top:8px;width:9px;height:9px;background:#eee;border-radius:1px"></div>
<svg style="left:285px;top:9px;width:7px;height:7px" viewBox="0 0 7 7"><path d="M1 3.5 L3 5.5 L6.2 1.2" fill="none" stroke="#222" stroke-width="1.6"/></svg>
<div class="t" style="left:299px;top:8px;font-size:10px;color:#d8d8d8;">消除锯齿</div>
<div class="a" style="left:364px;top:4px;width:77px;height:16px;background:#474747;border:1px solid #3f3f3f"></div>
<div class="t" style="left:372px;top:8px;font-size:10px;color:#e0e0e0;">选择并遮住...</div>
<svg style="left:1115px;top:5px;width:16px;height:16px" viewBox="0 0 16 16"><circle cx="6.5" cy="6.5" r="4.8" fill="none" stroke="#e6e6e6" stroke-width="1.5"/><path d="M10 10 L13.5 13.5" stroke="#e6e6e6" stroke-width="2"/></svg>
<svg style="left:1140px;top:7px;width:16px;height:12px" viewBox="0 0 16 12"><rect x="1" y="1" width="13.5" height="10" fill="none" stroke="#d8d8d8" stroke-width="1.4"/><rect x="3" y="3" width="2.5" height="6" fill="#e6e6e6"/><rect x="6.5" y="3" width="6" height="6" fill="#707070"/></svg>
<svg style="left:1162px;top:9px;width:8px;height:6px" viewBox="0 0 8 6"><path d="M1 1 L4 4 L7 1" fill="none" stroke="#8a8a8a" stroke-width="1.2"/></svg>
<svg style="left:1178px;top:5px;width:12px;height:15px" viewBox="0 0 12 15"><path d="M1 7 L1 13.5 L12 13.5" fill="none" stroke="#e6e6e6" stroke-width="1.5"/><path d="M7 11 L7 1.5 M4 4.5 L7 1.5 L10 4.5" fill="none" stroke="#e6e6e6" stroke-width="1.5"/></svg><svg style="left:4px;top:29px;width:9px;height:6px" viewBox="0 0 9 6"><path d="M0.5 0.5 L3 3 L0.5 5.5 M4.5 0.5 L7 3 L4.5 5.5" fill="none" stroke="#aaa" stroke-width="1.1"/></svg>
<svg style="left:0;top:0;width:32px;height:619px" viewBox="0 0 32 619"><defs><linearGradient id="tbgr"><stop offset="0" stop-color="#fff"/><stop offset="1" stop-color="#222"/></linearGradient></defs>
<g transform="translate(8,54)"><path d="M8 1 L8 15 M1 8 L15 8" stroke="#e6e6e6" stroke-width="1.4"/><path d="M8 0 L10.5 3 L5.5 3 Z M8 16 L10.5 13 L5.5 13 Z M0 8 L3 5.5 L3 10.5 Z M16 8 L13 5.5 L13 10.5Z" fill="#e6e6e6"/></g>
<rect x="25" y="69" width="1.5" height="1.5" fill="#bbb"/>
<g transform="translate(8,76)"><ellipse cx="8" cy="7" rx="6.5" ry="4.5" fill="none" stroke="#e6e6e6" stroke-width="1.3" stroke-dasharray="2.5 1.5"/></g>
<rect x="25" y="91" width="1.5" height="1.5" fill="#bbb"/>
<g transform="translate(8,97)"><path d="M2 4 L7 8 L14 2 L14 9 L8 13 L4 14" fill="none" stroke="#e6e6e6" stroke-width="1.3"/><path d="M7 8 L9 11 M3 11 L8 9.5" stroke="#e6e6e6" stroke-width="1.2"/></g>
<rect x="25" y="112" width="1.5" height="1.5" fill="#bbb"/>
<g transform="translate(8,120)"><path d="M2 15 L10 7" stroke="#e6e6e6" stroke-width="2.4"/><path d="M12 2 L12.6 4 L14.5 4.5 L12.6 5 L12 7 L11.4 5 L9.5 4.5 L11.4 4 Z" fill="#e6e6e6"/></g>
<rect x="25" y="135" width="1.5" height="1.5" fill="#bbb"/>
<g transform="translate(8,141)"><path d="M4 1 L4 12 L15 12 M1 4 L12 4 L12 15" fill="none" stroke="#e6e6e6" stroke-width="1.6"/></g>
<rect x="25" y="156" width="1.5" height="1.5" fill="#bbb"/>
<g transform="translate(8,163)"><path d="M2 15 L3 11 L9 5 L11 7 L5 13 Z" fill="none" stroke="#e6e6e6" stroke-width="1.3"/><path d="M9 4 L12 1 L15 4 L12 7 Z" fill="#e6e6e6"/></g>
<rect x="25" y="178" width="1.5" height="1.5" fill="#bbb"/>
<g transform="translate(8,185)"><path d="M14.5 1 L8.5 8 L10 9.5 L15.5 2 Z" fill="#e6e6e6"/><path d="M8 9 C5.5 9 4.8 11 4.3 12.8 C4 14 2.5 14.8 1.5 15 C5 15.8 9.5 14.5 10 11 Z" fill="#e6e6e6"/></g>
<rect x="25" y="200" width="1.5" height="1.5" fill="#bbb"/>
<g transform="translate(8,206)"><path d="M2 15 L3 11 L12 2 L14 4 L5 13 Z" fill="none" stroke="#e6e6e6" stroke-width="1.3"/></g>
<rect x="25" y="221" width="1.5" height="1.5" fill="#bbb"/>
<g transform="translate(8,228)"><path d="M14.5 1 L8.5 8 L10 9.5 L15.5 2 Z" fill="#e6e6e6"/><path d="M8 9 C5.5 9 4.8 11 4.3 12.8 C4 14 2.5 14.8 1.5 15 C5 15.8 9.5 14.5 10 11 Z" fill="#e6e6e6"/><path d="M1 4 C1 1 6 1 6 4 M4.5 3 L6 4.5 L7 2.5" fill="none" stroke="#e6e6e6" stroke-width="1.1"/></g>
<rect x="25" y="243" width="1.5" height="1.5" fill="#bbb"/>
<g transform="translate(8,249)"><path d="M14.5 1 L8.5 8 L10 9.5 L15.5 2 Z" fill="#e6e6e6"/><path d="M8 9 C5.5 9 4.8 11 4.3 12.8 C4 14 2.5 14.8 1.5 15 C5 15.8 9.5 14.5 10 11 Z" fill="#e6e6e6"/><path d="M3 3 C4.5 5 5 6 5 7 C5 8.2 1 8.2 1 7 C1 6 1.5 5 3 3 Z" fill="#e6e6e6"/></g>
<rect x="25" y="264" width="1.5" height="1.5" fill="#bbb"/>
<g transform="translate(8,271)"><circle cx="8" cy="4" r="3" fill="#e6e6e6"/><rect x="6.5" y="6" width="3" height="4" fill="#e6e6e6"/><rect x="2" y="10" width="12" height="3" fill="#e6e6e6"/><rect x="2" y="14" width="12" height="1.5" fill="#e6e6e6"/></g>
<rect x="25" y="286" width="1.5" height="1.5" fill="#bbb"/>
<g transform="translate(8,293)"><path d="M14.5 1 L8.5 8 L10 9.5 L15.5 2 Z" fill="#e6e6e6"/><path d="M8 9 C5.5 9 4.8 11 4.3 12.8 C4 14 2.5 14.8 1.5 15 C5 15.8 9.5 14.5 10 11 Z" fill="#e6e6e6"/><path d="M2 4 L5 6 M1 8 L4 8.5 M4 1.5 L6 4.5" stroke="#e6e6e6" stroke-width="1.2"/></g>
<rect x="25" y="308" width="1.5" height="1.5" fill="#bbb"/>
<g transform="translate(8,314)"><path d="M2 11 L9 4 L14 9 L9 14 L5 14 Z" fill="none" stroke="#e6e6e6" stroke-width="1.3"/><path d="M2 11 L5 14 L9 14 L6 11 Z" fill="#e6e6e6"/></g>
<rect x="25" y="329" width="1.5" height="1.5" fill="#bbb"/>
<g transform="translate(8,336)"><rect x="1.5" y="2.5" width="13" height="11" fill="url(#tbgr)" stroke="#e6e6e6" stroke-width="1.2"/></g>
<rect x="25" y="351" width="1.5" height="1.5" fill="#bbb"/>
<g transform="translate(8,358)"><path d="M8 1 C10 5 13 8 13 11 C13 14 10.5 15.5 8 15.5 C5.5 15.5 3 14 3 11 C3 8 6 5 8 1 Z" fill="#e6e6e6"/></g>
<rect x="25" y="373" width="1.5" height="1.5" fill="#bbb"/>
<g transform="translate(8,380)"><path d="M4 15 L5 11 C2 9 3 3 8 2 C13 1 15 5 13 9 L8 12 Z" fill="#e6e6e6"/><path d="M6 10 L11 5" stroke="#535353" stroke-width="1.2"/></g>
<rect x="25" y="395" width="1.5" height="1.5" fill="#bbb"/>
<g transform="translate(8,401)"><circle cx="8" cy="8" r="6.5" fill="#e6e6e6"/><path d="M4 6 C6 4 9 4 12 7 M3.5 9 C6 7 9 8 12 10 M5 12 C7 10 10 11 11 12.5" fill="none" stroke="#535353" stroke-width="1"/></g>
<g transform="translate(8,423)"><path d="M2 1.5 L14 1.5 L14 4.5 L12.5 4.5 L12 3 L9.5 3 L9.5 13.5 L11 14 L11 15.5 L5 15.5 L5 14 L6.5 13.5 L6.5 3 L4 3 L3.5 4.5 L2 4.5 Z" fill="#e6e6e6"/></g>
<g transform="translate(8,445)"><path d="M8 1 L14 7 L8 15 L2 7 Z" fill="none" stroke="#e6e6e6" stroke-width="1.4" transform="rotate(45 8 8)"/><circle cx="8" cy="8" r="1.5" fill="#e6e6e6"/></g>
<rect x="25" y="460" width="1.5" height="1.5" fill="#bbb"/>
<g transform="translate(8,466)"><path d="M4 1 L4 14 L7 11 L9.5 15.5 L11 14.7 L8.8 10.5 L13 10.5 Z" fill="#e6e6e6"/></g>
<rect x="25" y="481" width="1.5" height="1.5" fill="#bbb"/>
<g transform="translate(8,488)"><rect x="1.5" y="3.5" width="13" height="9" fill="none" stroke="#e6e6e6" stroke-width="1.5"/></g>
<rect x="25" y="503" width="1.5" height="1.5" fill="#bbb"/>
<g transform="translate(8,509)"><path d="M4 15 C2 12 2 10 2 8 L2 6 C2 5 4 5 4 6 L4 8 L4 2.5 C4 1.5 6 1.5 6 2.5 L6 7 L6 1.5 C6 0.5 8 0.5 8 1.5 L8 7 L8 2 C8 1 10 1 10 2 L10 8 L11.5 6 C12.5 5 14 6 13 7 L10 13 C9 15 8 15.5 6 15.5 Z" fill="#e6e6e6"/></g>
<g transform="translate(8,531)"><circle cx="6.5" cy="6.5" r="5" fill="none" stroke="#e6e6e6" stroke-width="1.6"/><path d="M10 10 L14.5 14.5" stroke="#e6e6e6" stroke-width="2.4"/></g>
<g transform="translate(8,553)"><circle cx="3" cy="8" r="1.6" fill="#e6e6e6"/><circle cx="8" cy="8" r="1.6" fill="#e6e6e6"/><circle cx="13" cy="8" r="1.6" fill="#e6e6e6"/></g>
<rect x="7" y="580" width="6" height="6" fill="#eee"/><rect x="4" y="577" width="6" height="6" fill="#111" stroke="#eee" stroke-width="1"/>
<path d="M20 578 L20 583 M18 581 L20 584 L22 581 M21 578 L26 578 L26 583 M24 581 L26 584" fill="none" stroke="#ddd" stroke-width="1.1"/>
</svg>
<div class="a" style="left:5px;top:92px;width:24px;height:25px;background:#2e2e2e;"></div>
<svg style="left:0;top:0;width:50px;height:130px" viewBox="0 0 50 130"><g transform="translate(8,97)"><path d="M2 4 L7 8 L14 2 L14 9 L8 13 L4 14" fill="none" stroke="#e6e6e6" stroke-width="1.3"/><path d="M7 8 L9 11 M3 11 L8 9.5" stroke="#e6e6e6" stroke-width="1.2"/></g><rect x="25" y="112" width="1.5" height="1.5" fill="#bbb"/></svg>
<div class="a" style="left:3px;top:88px;width:41px;height:37px;background:transparent;border:2px solid #e8261c"></div>
<div class="a" style="left:13px;top:599px;width:16px;height:15px;background:#0a0a0a;border:1px solid #f2f2f2"></div>
<div class="a" style="left:5px;top:591px;width:15px;height:15px;background:#0b5a12;border:1px solid #e8f2e8"></div><svg style="left:983px;top:29px;width:9px;height:7px" viewBox="0 0 9 7"><path d="M3.5 0.5 L1 3 L3.5 5.5 M7.5 0.5 L5 3 L7.5 5.5" fill="none" stroke="#aaa" stroke-width="1.1"/></svg>
<div class="a" style="left:962px;top:38px;width:34px;height:57px;background:#535353;border-bottom:2px solid #3e3e3e;border-right:1px solid #3e3e3e"></div>
<div class="a" style="left:962px;top:95px;width:34px;height:55px;background:#535353;border-bottom:2px solid #3e3e3e;border-right:1px solid #3e3e3e"></div>
<div class="a" style="left:962px;top:150px;width:34px;height:38px;background:#535353;border-bottom:2px solid #3e3e3e;border-right:1px solid #3e3e3e"></div>
<div class="a" style="left:962px;top:188px;width:34px;height:39px;background:#535353;border-bottom:2px solid #3e3e3e;border-right:1px solid #3e3e3e"></div>
<div class="a" style="left:962px;top:227px;width:34px;height:51px;background:#535353;border-bottom:2px solid #3e3e3e;border-right:1px solid #3e3e3e"></div>
<div class="a" style="left:962px;top:278px;width:34px;height:57px;background:#535353;border-bottom:2px solid #3e3e3e;border-right:1px solid #3e3e3e"></div>
<div class="a" style="left:962px;top:335px;width:34px;height:37px;background:#535353;border-bottom:2px solid #3e3e3e;border-right:1px solid #3e3e3e"></div>
<div class="a" style="left:962px;top:372px;width:34px;height:32px;background:#535353;border-bottom:2px solid #3e3e3e;border-right:1px solid #3e3e3e"></div>
<svg style="left:971px;top:50px;width:16px;height:16px" viewBox="0 0 16 16"><rect x="1" y="1" width="4" height="3.5" fill="none" stroke="#e6e6e6" stroke-width="1"/><rect x="1" y="6" width="4" height="3.5" fill="none" stroke="#e6e6e6" stroke-width="1"/><rect x="1" y="11" width="4" height="3.5" fill="#e6e6e6"/><path d="M9 4 C13 3 14 7 12 10 L10 13" fill="none" stroke="#e6e6e6" stroke-width="1.6"/><path d="M8 2 L11 1 L10 5 Z" fill="#e6e6e6"/></svg>
<svg style="left:971px;top:74px;width:16px;height:16px" viewBox="0 0 16 16"><path d="M3 1 L14 8 L3 15 Z" fill="#e6e6e6"/></svg>
<svg style="left:971px;top:104px;width:16px;height:16px" viewBox="0 0 16 16"><path d="M5 2 L9 4 L9 9 L5 11 L1 9 L1 4 Z" fill="none" stroke="#e6e6e6" stroke-width="1.2"/><rect x="11" y="2" width="4" height="3" fill="#e6e6e6"/><rect x="11" y="7" width="4" height="3" fill="#e6e6e6"/><rect x="1" y="12.5" width="14" height="2.5" fill="#e6e6e6"/></svg>
<svg style="left:971px;top:130px;width:16px;height:16px" viewBox="0 0 16 16"><circle cx="8" cy="8" r="6.8" fill="none" stroke="#e6e6e6" stroke-width="1.4"/><rect x="7.2" y="6.5" width="1.6" height="5.5" fill="#e6e6e6"/><rect x="7.2" y="3.5" width="1.6" height="1.6" fill="#e6e6e6"/></svg>
<svg style="left:971px;top:164px;width:16px;height:16px" viewBox="0 0 16 16"><path d="M1 2 L3 2 M1 5 L3 5 M1 8 L3 8 M5 2 L7 2 M5 5 L7 5" stroke="#e6e6e6" stroke-width="1.3"/><path d="M5 15 C4 12 6 10 8 11 L14 3 L15 4 L10 13 C9 15 7 15.5 5 15 Z" fill="#e6e6e6"/></svg>
<svg style="left:971px;top:198px;width:16px;height:16px" viewBox="0 0 16 16"><path d="M1 2 L3 2 M1 5 L3 5 M1 8 L3 8 M5 2 L7 2 M5 5 L7 5" stroke="#e6e6e6" stroke-width="1.3"/><circle cx="10.5" cy="5" r="2.7" fill="#e6e6e6"/><rect x="9.5" y="7" width="2" height="3" fill="#e6e6e6"/><rect x="5" y="10" width="11" height="3" fill="#e6e6e6"/><rect x="5" y="14" width="11" height="1.5" fill="#e6e6e6"/></svg>
<svg style="left:971px;top:233px;width:16px;height:16px" viewBox="0 0 16 16"><path d="M1 14 L5.5 2 L7 2 L11.5 14 M3 10 L9.5 10" fill="none" stroke="#e6e6e6" stroke-width="1.5"/><rect x="13.5" y="1" width="1.2" height="14" fill="#e6e6e6"/></svg>
<svg style="left:971px;top:256px;width:16px;height:16px" viewBox="0 0 16 16"><path d="M7 2 L14 2 L14 4 L12.5 4 L12.5 15 L10.5 15 L10.5 4 L9.5 4 L9.5 15 L7.5 15 L7.5 9 C4 9 3 7 3 5.5 C3 3.5 4.5 2 7 2 Z" fill="#e6e6e6"/></svg>
<svg style="left:971px;top:290px;width:16px;height:16px" viewBox="0 0 16 16"><rect x="2" y="1.5" width="12" height="13" fill="none" stroke="#e6e6e6" stroke-width="1.5"/><rect x="2" y="7" width="12" height="1.5" fill="#e6e6e6"/><rect x="7.5" y="1.5" width="1.5" height="6" fill="#e6e6e6"/><rect x="3.5" y="9.5" width="9" height="3.5" fill="#e6e6e6"/></svg>
<svg style="left:971px;top:312px;width:16px;height:16px" viewBox="0 0 16 16"><path d="M2 1 L14 1 L14 10 L10 15 L2 15 Z" fill="#e6e6e6"/><path d="M4 4 L11 4 M4 6.5 L11 6.5 M4 9 L8 9" stroke="#535353" stroke-width="1"/><path d="M10 15 L10 10 L14 10" fill="#888"/></svg>
<svg style="left:971px;top:348px;width:16px;height:16px" viewBox="0 0 16 16"><path d="M2 3 L13 14" stroke="#e6e6e6" stroke-width="2.2"/><path d="M13 2 L3 12" stroke="#e6e6e6" stroke-width="2.2"/><circle cx="3" cy="13" r="2.2" fill="#e6e6e6"/><circle cx="13" cy="13" r="2" fill="none" stroke="#e6e6e6" stroke-width="1"/><path d="M11 1 L15 1 L15 5" fill="none" stroke="#e6e6e6" stroke-width="1.5"/></svg>
<svg style="left:971px;top:380px;width:16px;height:16px" viewBox="0 0 16 16"><rect x="1.5" y="2" width="13" height="12" fill="none" stroke="#bbb" stroke-width="1.4"/><rect x="8" y="2" width="4" height="5" fill="#ddd"/><rect x="3" y="3.5" width="5" height="6" fill="#777"/></svg><div class="a" style="left:997px;top:38px;width:193px;height:23px;background:#444;"></div>
<div class="a" style="left:997px;top:38px;width:35px;height:23px;background:#535353;"></div>
<div class="t" style="left:1002px;top:45px;font-size:10px;color:#e8e8e8;">颜色</div>
<div class="t" style="left:1040px;top:45px;font-size:10px;color:#a8a8a8;">色板</div>
<div class="t" style="left:1076px;top:45px;font-size:10px;color:#a8a8a8;">导航器</div>
<svg style="left:1184px;top:46px;width:6px;height:8px" viewBox="0 0 6 8"><path d="M0 1 L6 1 M0 4 L6 4 M0 7 L6 7" stroke="#aaa" stroke-width="1.2"/></svg>
<div class="a" style="left:1013px;top:79px;width:16px;height:16px;background:#050505;border:1.5px solid #eee"></div>
<div class="a" style="left:1005px;top:71px;width:16px;height:16px;background:#0a5a12;border:1.5px solid #e0f0e0"></div>
<svg style="left:1002px;top:112px;width:14px;height:13px" viewBox="0 0 14 13"><path d="M7 0.5 L13.5 12.5 L0.5 12.5 Z" fill="#eee"/><rect x="6.3" y="4" width="1.4" height="5" fill="#333"/><rect x="6.3" y="10" width="1.4" height="1.4" fill="#333"/></svg>
<div class="a" style="left:1016px;top:114px;width:11px;height:11px;background:#0c5c36;border:1.5px solid #ddd"></div>
<div class="a" style="left:1033px;top:66px;width:122px;height:65px;background:linear-gradient(to bottom, rgba(0,0,0,0) 0%, rgba(0,0,0,0.3) 45%, rgba(0,0,0,0.75) 80%, #000 100%), linear-gradient(to right, #fff, #00ff20);"></div>
<svg style="left:1145px;top:107px;width:12px;height:12px" viewBox="0 0 12 12"><circle cx="6" cy="6" r="4.8" fill="none" stroke="#8c8" stroke-width="1.3"/></svg>
<div class="a" style="left:1169px;top:66px;width:17px;height:65px;background:linear-gradient(to bottom,#ff0010 0%,#ff00ff 17%,#4000ff 30%,#0080ff 45%,#00ffff 52%,#00ff40 66%,#ffff00 83%,#ff2000 100%);"></div>
<svg style="left:1160px;top:103px;width:8px;height:9px" viewBox="0 0 8 9"><path d="M1 0.5 L7 4.5 L1 8.5 Z" fill="#fff"/></svg>
<div class="a" style="left:997px;top:148px;width:193px;height:2px;background:#3a3a3a;"></div><div class="a" style="left:997px;top:150px;width:193px;height:23px;background:#444;"></div>
<div class="a" style="left:997px;top:150px;width:35px;height:23px;background:#535353;"></div>
<div class="t" style="left:1002px;top:157px;font-size:10px;color:#e0e0e0;">画笔</div>
<svg style="left:1184px;top:158px;width:6px;height:8px" viewBox="0 0 6 8"><path d="M0 1 L6 1 M0 4 L6 4 M0 7 L6 7" stroke="#aaa" stroke-width="1.2"/></svg>
<div class="t" style="left:1002px;top:183px;font-size:10px;color:#707070;">大小</div>
<div class="a" style="left:1096px;top:180px;width:50px;height:15px;background:#4a4a4a;"></div>
<div class="a" style="left:1003px;top:203px;width:138px;height:2px;background:#6a6a6a;"></div>
<svg style="left:1160px;top:189px;width:15px;height:15px" viewBox="0 0 15 15"><path d="M0 1 L6 1 L8 3 L15 3 L15 15 L0 15 Z" fill="#e6e6e6"/><path d="M3 13 C3 11 4.5 10 6 10.5 L12 4.5 L13 5.5 L7.5 11.5 C7 13 5 14 3 13 Z" fill="#333"/></svg>
<div class="a" style="left:997px;top:215px;width:187px;height:28px;background:#4a4a4a;"></div>
<div class="a" style="left:1022px;top:215px;width:1px;height:28px;background:#3e3e3e;"></div>
<div class="a" style="left:1050px;top:215px;width:1px;height:28px;background:#3e3e3e;"></div>
<div class="a" style="left:1077px;top:215px;width:1px;height:28px;background:#3e3e3e;"></div>
<div class="a" style="left:1103px;top:215px;width:1px;height:28px;background:#3e3e3e;"></div>
<div class="a" style="left:1130px;top:215px;width:1px;height:28px;background:#3e3e3e;"></div>
<div class="a" style="left:1156px;top:215px;width:1px;height:28px;background:#3e3e3e;"></div>
<svg style="left:997px;top:215px;width:187px;height:28px" viewBox="997 215 187 28"><defs><radialGradient id="soft"><stop offset="0" stop-color="#fff"/><stop offset="0.5" stop-color="#ccc" stop-opacity="0.8"/><stop offset="1" stop-color="#888" stop-opacity="0"/></radialGradient></defs><circle cx="1010" cy="229.5" r="8" fill="url(#soft)"/><circle cx="1036.6" cy="229.4" r="12" fill="#fff"/><circle cx="1063.6" cy="224" r="6.8" fill="#fff"/><circle cx="1090.5" cy="224.4" r="3.8" fill="#fff"/><circle cx="1116.9" cy="224" r="6.8" fill="#fff"/><circle cx="1143.8" cy="224" r="1.8" fill="#fff"/><circle cx="1170" cy="222" r="0.9" fill="#ddd"/></svg>
<div class="t" style="left:1057px;top:233px;font-size:9px;color:#d8d8d8;">35</div>
<div class="t" style="left:1085px;top:233px;font-size:9px;color:#d8d8d8;">15</div>
<div class="t" style="left:1110px;top:233px;font-size:9px;color:#d8d8d8;">30</div>
<div class="t" style="left:1141px;top:233px;font-size:9px;color:#d8d8d8;">7</div>
<div class="t" style="left:1167px;top:233px;font-size:9px;color:#d8d8d8;">4</div>
<div class="a" style="left:997px;top:247px;width:190px;height:21px;background:#464646;"></div>
<svg style="left:1002px;top:254px;width:8px;height:6px" viewBox="0 0 8 6"><path d="M1 1 L4 4 L7 1" fill="none" stroke="#aaa" stroke-width="1.1"/></svg>
<svg style="left:1013px;top:251px;width:13px;height:11px" viewBox="0 0 13 11"><path d="M0.5 0.5 L5 0.5 L6 2 L12.5 2 L12.5 10.5 L0.5 10.5 Z" fill="#e8e8e8"/><rect x="1.5" y="4" width="10" height="1" fill="#555"/></svg>
<div class="t" style="left:1033px;top:253px;font-size:10px;color:#e0e0e0;">常规画笔</div>
<div class="a" style="left:1186px;top:260px;width:3px;height:30px;background:#6a6a6a;"></div>
<div class="a" style="left:1013px;top:268px;width:100px;height:85px;background:#4d4d4d;"></div>
<svg style="left:1010px;top:266px;width:110px;height:90px" viewBox="1010 266 110 90"><defs><filter id="bb" x="-20%" y="-200%" width="140%" height="500%"><feGaussianBlur stdDeviation="1.6"/></filter></defs><path d="M1017 278 C1040 271 1060 281 1080 279 C1095 277 1105 275 1110 277" fill="none" stroke="#fff" stroke-width="8" stroke-linecap="round" filter="url(#bb)"/><path d="M1017 311 C1040 304 1060 315 1080 313 C1095 311 1105 309 1110 311" fill="none" stroke="#fff" stroke-width="10" stroke-linecap="round"/><path d="M1017 345 C1040 338 1060 348 1080 346 C1095 344 1105 342 1110 344" fill="none" stroke="#fff" stroke-width="8" stroke-linecap="round" filter="url(#bb)"/></svg>
<div class="t" style="left:1019px;top:289px;font-size:10px;color:#d8d8d8;">柔边圆</div>
<div class="t" style="left:1019px;top:322px;font-size:10px;color:#d8d8d8;">硬边圆</div>
<div class="a" style="left:997px;top:353px;width:193px;height:21px;background:#535353;border-top:1px solid #3e3e3e"></div>
<div class="a" style="left:1003px;top:359px;width:67px;height:2px;background:#6a6a6a;"></div>
<svg style="left:1002px;top:361px;width:12px;height:10px" viewBox="0 0 12 10"><path d="M6 1 C8 2 11 6 11 8 C11 9.5 1 9.5 1 8 C1 6 4 2 6 1 Z" fill="#eee"/></svg>
<svg style="left:1088px;top:357px;width:18px;height:12px" viewBox="0 0 18 12"><ellipse cx="6" cy="6" rx="5.5" ry="3.5" fill="none" stroke="#ccc" stroke-width="1.3"/><circle cx="6" cy="6" r="1.6" fill="#ccc"/><path d="M11 11 L17 2" stroke="#ccc" stroke-width="1.5"/></svg>
<svg style="left:1116px;top:358px;width:13px;height:11px" viewBox="0 0 13 11"><path d="M0.5 0.5 L5 0.5 L6 2 L12.5 2 L12.5 10.5 L0.5 10.5 Z" fill="#ddd"/></svg>
<svg style="left:1140px;top:357px;width:12px;height:12px" viewBox="0 0 12 12"><path d="M3 1 L11 1 L11 11 L1 11 L1 4 L3 4 Z" fill="none" stroke="#ccc" stroke-width="1.3"/><path d="M1 4 L3 4 L3 1" fill="#ccc"/></svg>
<svg style="left:1164px;top:356px;width:12px;height:14px" viewBox="0 0 12 14"><path d="M2 4 L10 4 L9 13 L3 13 Z M1 2.5 L11 2.5 M4.5 1 L7.5 1" fill="none" stroke="#888" stroke-width="1.3"/></svg>
<div class="a" style="left:997px;top:374px;width:193px;height:2px;background:#3a3a3a;"></div><div class="a" style="left:997px;top:376px;width:193px;height:23px;background:#444;"></div>
<div class="a" style="left:997px;top:376px;width:36px;height:23px;background:#535353;"></div>
<div class="t" style="left:1002px;top:383px;font-size:10px;color:#e8e8e8;">图层</div>
<div class="t" style="left:1041px;top:383px;font-size:10px;color:#a8a8a8;">通道</div>
<div class="t" style="left:1078px;top:383px;font-size:10px;color:#a8a8a8;">路径</div>
<svg style="left:1184px;top:384px;width:6px;height:8px" viewBox="0 0 6 8"><path d="M0 1 L6 1 M0 4 L6 4 M0 7 L6 7" stroke="#aaa" stroke-width="1.2"/></svg>
<div class="a" style="left:1001px;top:408px;width:68px;height:15px;background:#464646;"></div>
<svg style="left:1005px;top:409px;width:11px;height:12px" viewBox="0 0 11 12"><circle cx="4.5" cy="4.5" r="3.3" fill="none" stroke="#eee" stroke-width="1.5"/><path d="M7 7 L10 10" stroke="#eee" stroke-width="1.8"/></svg>
<div class="t" style="left:1018px;top:410px;font-size:10px;color:#e0e0e0;">类型</div>
<svg style="left:1061px;top:413px;width:8px;height:6px" viewBox="0 0 8 6"><path d="M1 1 L4 4 L7 1" fill="none" stroke="#999" stroke-width="1.1"/></svg>
<svg style="left:1083px;top:408px;width:13px;height:12px" viewBox="0 0 13 12"><rect x="1" y="1" width="11" height="9.5" fill="none" stroke="#ddd" stroke-width="1.3"/><path d="M3 9 L5 6 L7 8 L8 7 L10 9 Z" fill="#ddd"/></svg>
<svg style="left:1103px;top:408px;width:12px;height:12px" viewBox="0 0 12 12"><circle cx="6" cy="6" r="5" fill="#ddd"/><path d="M2.5 9.5 L9.5 2.5 A5 5 0 0 1 9.5 9.5 Z" fill="#535353"/></svg>
<div class="t" style="left:1123px;top:407px;font-size:14px;color:#e8e8e8;font-family:Liberation Serif;font-weight:bold">T</div>
<svg style="left:1143px;top:408px;width:13px;height:13px" viewBox="0 0 13 13"><rect x="2" y="2" width="9" height="9" fill="none" stroke="#ddd" stroke-width="1.5"/><rect x="0.5" y="0.5" width="3" height="3" fill="#ddd"/><rect x="9.5" y="0.5" width="3" height="3" fill="#ddd"/><rect x="0.5" y="9.5" width="3" height="3" fill="#ddd"/><rect x="9.5" y="9.5" width="3" height="3" fill="#ddd"/></svg>
<svg style="left:1164px;top:407px;width:12px;height:14px" viewBox="0 0 12 14"><rect x="1" y="6" width="9" height="7" fill="#ddd"/><path d="M3 6 L3 4 C3 1 8 1 8 4" fill="none" stroke="#ddd" stroke-width="1.4"/><rect x="6" y="1" width="5" height="6" fill="#535353" stroke="#ddd" stroke-width="1"/></svg>
<div class="a" style="left:1187px;top:407px;width:3px;height:14px;background:#ddd;"></div>
<div class="a" style="left:997px;top:426px;width:193px;height:1px;background:#4a4a4a;"></div>
<div class="a" style="left:1001px;top:432px;width:95px;height:15px;background:#464646;"></div>
<div class="t" style="left:1006px;top:434px;font-size:10px;color:#e0e0e0;">正常</div>
<svg style="left:1088px;top:437px;width:8px;height:6px" viewBox="0 0 8 6"><path d="M1 1 L4 4 L7 1" fill="none" stroke="#999" stroke-width="1.1"/></svg>
<div class="t" style="left:1103px;top:434px;font-size:10px;color:#cfcfcf;">不透明度:</div>
<div class="a" style="left:1151px;top:432px;width:31px;height:15px;background:#464646;"></div>
<div class="t" style="left:1152px;top:434px;font-size:10.5px;color:#e0e0e0;">100%</div>
<svg style="left:1184px;top:437px;width:6px;height:6px" viewBox="0 0 6 6"><path d="M1 1 L4 4 L7 1" fill="none" stroke="#999" stroke-width="1.1"/></svg>
<div class="t" style="left:1002px;top:458px;font-size:10px;color:#a8a8a8;">锁定</div>
<div class="a" style="left:1030px;top:453px;width:19px;height:19px;background:#2c2c2c;"></div>
<svg style="left:1032px;top:456px;width:12px;height:12px" viewBox="0 0 12 12"><rect x="0.5" y="0.5" width="11" height="11" fill="#fff"/><rect x="2" y="2" width="2.5" height="2.5" fill="#222"/><rect x="7.5" y="2" width="2.5" height="2.5" fill="#222"/><rect x="4.75" y="4.75" width="2.5" height="2.5" fill="#222"/><rect x="2" y="7.5" width="2.5" height="2.5" fill="#222"/><rect x="7.5" y="7.5" width="2.5" height="2.5" fill="#222"/></svg>
<svg style="left:1052px;top:455px;width:10px;height:14px" viewBox="0 0 10 14"><path d="M1 13 L9 1" stroke="#ddd" stroke-width="1.6"/></svg>
<svg style="left:1067px;top:455px;width:15px;height:15px" viewBox="0 0 15 15"><path d="M7.5 1 L7.5 14 M1 7.5 L14 7.5" stroke="#ddd" stroke-width="1.4"/><path d="M7.5 0 L10 3 L5 3 Z M7.5 15 L10 12 L5 12Z M0 7.5 L3 5 L3 10 Z M15 7.5 L12 5 L12 10 Z" fill="#ddd"/></svg>
<svg style="left:1085px;top:455px;width:14px;height:14px" viewBox="0 0 14 14"><path d="M3 1 L3 12 L13 12 M0 4 L6 4 C10 4 11 6 11 9" fill="none" stroke="#ccc" stroke-width="1.3"/></svg>
<svg style="left:1105px;top:455px;width:11px;height:14px" viewBox="0 0 11 14"><rect x="1" y="6" width="9" height="7.5" fill="#ddd"/><path d="M2.5 6 L2.5 4 C2.5 0.8 8.5 0.8 8.5 4 L8.5 6" fill="none" stroke="#ddd" stroke-width="1.5"/><rect x="4.8" y="8" width="1.4" height="3" fill="#535353"/></svg>
<div class="t" style="left:1123px;top:458px;font-size:10px;color:#cfcfcf;">填充:</div>
<div class="a" style="left:1151px;top:455px;width:31px;height:15px;background:#464646;"></div>
<div class="t" style="left:1152px;top:458px;font-size:10px;color:#e0e0e0;">100%</div>
<svg style="left:1184px;top:461px;width:6px;height:6px" viewBox="0 0 6 6"><path d="M1 1 L4 4 L7 1" fill="none" stroke="#999" stroke-width="1.1"/></svg>
<div class="a" style="left:997px;top:476px;width:193px;height:143px;background:#535353;"></div>
<div class="a" style="left:997px;top:477px;width:188px;height:27px;background:#535353;"></div>
<div class="a" style="left:1021px;top:477px;width:164px;height:27px;background:#686868;"></div>
<div class="a" style="left:997px;top:504px;width:188px;height:1px;background:#404040;"></div>
<div class="a" style="left:1020px;top:477px;width:1px;height:27px;background:#454545;"></div>
<div class="a" style="left:997px;top:504px;width:188px;height:27px;background:#535353;"></div>
<div class="a" style="left:997px;top:531px;width:188px;height:1px;background:#404040;"></div>
<div class="a" style="left:1020px;top:504px;width:1px;height:27px;background:#454545;"></div>
<div class="a" style="left:997px;top:531px;width:188px;height:27px;background:#535353;"></div>
<div class="a" style="left:997px;top:558px;width:188px;height:1px;background:#404040;"></div>
<div class="a" style="left:1020px;top:531px;width:1px;height:27px;background:#454545;"></div>
<div class="a" style="left:997px;top:559px;width:188px;height:27px;background:#535353;"></div>
<div class="a" style="left:997px;top:586px;width:188px;height:1px;background:#404040;"></div>
<div class="a" style="left:1020px;top:559px;width:1px;height:27px;background:#454545;"></div>
<div class="a" style="left:997px;top:587px;width:188px;height:27px;background:#535353;"></div>
<div class="a" style="left:997px;top:614px;width:188px;height:1px;background:#404040;"></div>
<div class="a" style="left:1020px;top:587px;width:1px;height:27px;background:#454545;"></div>
<svg style="left:1002px;top:485px;width:14px;height:10px" viewBox="0 0 14 10"><path d="M0.5 5 C3 1 11 1 13.5 5 C11 9 3 9 0.5 5 Z" fill="#e8e8e8"/><circle cx="7" cy="5" r="2.6" fill="#535353"/><circle cx="7" cy="5" r="1.4" fill="#e8e8e8"/></svg>
<svg style="left:1002px;top:513px;width:14px;height:10px" viewBox="0 0 14 10"><path d="M0.5 5 C3 1 11 1 13.5 5 C11 9 3 9 0.5 5 Z" fill="#e8e8e8"/><circle cx="7" cy="5" r="2.6" fill="#535353"/><circle cx="7" cy="5" r="1.4" fill="#e8e8e8"/></svg>
<svg style="left:1002px;top:541px;width:14px;height:10px" viewBox="0 0 14 10"><path d="M0.5 5 C3 1 11 1 13.5 5 C11 9 3 9 0.5 5 Z" fill="#e8e8e8"/><circle cx="7" cy="5" r="2.6" fill="#535353"/><circle cx="7" cy="5" r="1.4" fill="#e8e8e8"/></svg>
<div class="a" style="left:1002px;top:566px;width:13px;height:13px;background:transparent;border:1px solid #5e5e5e"></div>
<svg style="left:1002px;top:596px;width:14px;height:10px" viewBox="0 0 14 10"><path d="M0.5 5 C3 1 11 1 13.5 5 C11 9 3 9 0.5 5 Z" fill="#e8e8e8"/><circle cx="7" cy="5" r="2.6" fill="#535353"/><circle cx="7" cy="5" r="1.4" fill="#e8e8e8"/></svg>
<div class="a" style="left:1023px;top:480px;width:30px;height:21px;background:#fff;background-image:linear-gradient(45deg,#ddd 25%,transparent 25%,transparent 75%,#ddd 75%),linear-gradient(45deg,#ddd 25%,transparent 25%,transparent 75%,#ddd 75%);background-size:4px 4px;background-position:0 0,2px 2px;border:1.5px solid #f4f4f4"></div>
<div class="t" style="left:1060px;top:486px;font-size:10px;color:#e8e8e8;">勾线</div>
<svg style="left:1162px;top:484px;width:10px;height:12px" viewBox="0 0 10 12"><path d="M2.5 5 L2.5 3.5 C2.5 0.5 7.5 0.5 7.5 3.5 L7.5 5" fill="none" stroke="#ddd" stroke-width="1.3"/><rect x="1" y="5" width="8" height="6.5" fill="none" stroke="#ddd" stroke-width="1.3"/><rect x="4.3" y="7" width="1.4" height="2.5" fill="#ddd"/></svg>
<svg style="left:1028px;top:512px;width:8px;height:10px" viewBox="0 0 8 10"><path d="M6 1 L6 6 L2 6 M4 4 L2 6 L4 8" fill="none" stroke="#ddd" stroke-width="1.2"/></svg>
<div class="a" style="left:1038px;top:508px;width:27px;height:20px;background:#fff;background-image:linear-gradient(45deg,#ddd 25%,transparent 25%,transparent 75%,#ddd 75%),linear-gradient(45deg,#ddd 25%,transparent 25%,transparent 75%,#ddd 75%);background-size:4px 4px;background-position:0 0,2px 2px;"></div>
<svg style="left:1038px;top:508px;width:27px;height:20px" viewBox="0 0 27 20"><ellipse cx="13" cy="6" rx="7" ry="4.5" fill="#d070ea"/><ellipse cx="13" cy="6" rx="4" ry="2.5" fill="#f0a0f0"/></svg>
<div class="t" style="left:1073px;top:513px;font-size:10px;color:#e0e0e0;">图层 3</div>
<div class="a" style="left:1025px;top:536px;width:27px;height:20px;background:#fff;background-image:linear-gradient(45deg,#ddd 25%,transparent 25%,transparent 75%,#ddd 75%),linear-gradient(45deg,#ddd 25%,transparent 25%,transparent 75%,#ddd 75%);background-size:4px 4px;background-position:0 0,2px 2px;"></div>
<svg style="left:1025px;top:536px;width:27px;height:20px" viewBox="0 0 27 20"><ellipse cx="13" cy="6.5" rx="4.5" ry="3" fill="#b050e0"/></svg>
<div class="t" style="left:1060px;top:541px;font-size:10px;color:#e0e0e0;text-decoration:underline">图层 2</div>
<div class="a" style="left:1025px;top:563px;width:27px;height:21px;background:#0e160e;"></div>
<svg style="left:1025px;top:563px;width:27px;height:21px" viewBox="0 0 27 21"><ellipse cx="14" cy="8" rx="5" ry="4" fill="#c040f0"/><path d="M14 11 L13 19 M8 14 L12 17 M18 13 L14 17" stroke="#3a8a3a" stroke-width="1.2"/><rect x="0" y="18" width="27" height="3" fill="#eee"/><rect x="24" y="0" width="3" height="21" fill="#ddd"/></svg>
<div class="t" style="left:1060px;top:569px;font-size:10px;color:#e0e0e0;">图层 1</div>
<div class="a" style="left:1025px;top:591px;width:27px;height:20px;background:#fff;"></div>
<div class="t" style="left:1060px;top:597px;font-size:10px;color:#e0e0e0;">背景</div>
<svg style="left:1162px;top:595px;width:10px;height:12px" viewBox="0 0 10 12"><path d="M2.5 5 L2.5 3.5 C2.5 0.5 7.5 0.5 7.5 3.5 L7.5 5" fill="none" stroke="#ddd" stroke-width="1.3"/><rect x="1" y="5" width="8" height="6.5" fill="none" stroke="#ddd" stroke-width="1.3"/><rect x="4.3" y="7" width="1.4" height="2.5" fill="#ddd"/></svg>
<div class="a" style="left:1185px;top:476px;width:5px;height:143px;background:#4a4a4a;"></div>
<div class="a" style="left:1020px;top:445px;width:36px;height:33px;background:transparent;border:2.5px solid #e8261c"></div>
<svg class="a" style="left:0;top:0;width:1190px;height:619px" viewBox="0 0 1190 619">
<defs><clipPath id="cv"><rect x="48" y="66" width="899" height="553"/></clipPath></defs>
<g clip-path="url(#cv)">
<path d="M485.7 387.0 C486.0 393.3 486.7 412.8 487.5 425.0 C488.3 437.2 489.0 449.2 490.6 460.0 C492.2 470.8 494.6 480.7 497.0 490.0 C499.4 499.3 503.7 511.7 505.0 516.0 L511 517 L556 395 L484 370 Z" fill="#d2c4ee"/>
<path d="M485.7 387.0 C486.0 393.3 486.7 412.8 487.5 425.0 C488.3 437.2 489.0 449.2 490.6 460.0 C492.2 470.8 494.6 480.7 497.0 490.0 C499.4 499.3 503.7 511.7 505.0 516.0" fill="none" stroke="#808080" stroke-width="3.4"/>
<path d="M553 409 L511 516" fill="none" stroke="#808080" stroke-width="3.4"/><defs>
<clipPath id="pc"><path d="M353.5 256.0 C352.1 249.5 352.8 243.5 353.0 239.0 C353.2 234.5 352.8 233.4 355.0 229.0 C357.2 224.6 362.4 216.5 366.0 212.7 C369.6 208.9 373.5 209.1 376.5 206.2 C379.5 203.2 381.0 199.0 383.8 195.0 C386.6 191.0 389.2 186.3 393.5 182.0 C397.8 177.7 404.2 172.2 409.6 169.0 C415.0 165.8 418.8 164.3 425.8 162.6 C432.8 160.8 444.4 160.3 451.5 158.5 C458.6 156.7 460.8 154.1 468.5 151.8 C476.2 149.5 488.7 145.9 497.6 144.5 C506.5 143.1 514.7 143.1 521.8 143.3 C528.9 143.5 536.2 144.8 540.0 145.8 C543.8 146.8 541.9 147.2 544.5 149.4 C547.1 151.6 552.7 157.0 555.5 159.0 C558.3 161.0 557.7 161.5 561.5 161.5 C565.3 161.5 571.6 158.6 578.5 159.0 C585.4 159.4 595.0 161.6 602.7 164.0 C610.4 166.4 617.6 169.2 624.5 173.6 C631.4 178.0 638.8 184.9 644.0 190.6 C649.2 196.3 651.1 204.2 656.0 207.6 C660.9 211.0 667.8 208.5 673.6 211.0 C679.4 213.5 685.8 218.1 691.0 222.6 C696.2 227.1 700.8 232.8 704.6 238.0 C708.4 243.2 712.3 249.3 714.0 253.6 C715.7 257.9 716.0 260.4 715.0 264.0 C714.0 267.6 707.3 271.6 708.0 275.0 C708.7 278.4 716.3 279.3 719.0 284.5 C721.7 289.7 723.6 299.5 724.0 306.4 C724.4 313.3 723.2 320.1 721.5 325.8 C719.8 331.5 717.6 336.7 714.0 340.3 C710.4 343.9 702.9 344.0 699.7 347.6 C696.5 351.2 698.1 357.1 694.8 362.0 C691.5 366.9 686.5 372.6 680.0 376.7 C673.5 380.8 663.2 385.2 656.0 386.4 C648.8 387.6 641.5 382.4 636.7 384.0 C631.9 385.6 632.7 392.4 627.0 396.0 C621.3 399.6 610.8 403.6 602.7 405.8 C594.6 408.0 586.6 409.4 578.5 409.4 C570.4 409.4 562.1 408.4 554.0 405.8 C545.9 403.2 537.4 396.8 530.0 393.6 C522.6 390.4 516.7 387.6 509.7 386.4 C502.7 385.2 493.5 386.6 487.9 386.4 C482.2 386.2 481.4 386.4 475.8 385.2 C470.2 384.0 460.5 381.6 454.0 379.0 C447.5 376.4 441.9 373.4 437.0 369.4 C432.1 365.4 428.0 358.6 424.8 354.8 C421.6 351.0 423.7 348.8 417.6 346.4 C411.6 344.0 396.2 342.9 388.5 340.3 C380.8 337.7 375.8 333.8 371.5 330.6 C367.2 327.4 365.1 325.8 362.6 321.0 C360.1 316.2 357.0 308.0 356.3 302.0 C355.6 296.0 357.5 289.2 358.4 285.2 C359.3 281.2 362.3 282.8 361.5 277.9 C360.7 273.0 354.9 262.5 353.5 256.0Z"/></clipPath>
<clipPath id="pu"><path d="M417.6 346.4 C423.4 345.4 441.1 341.1 452.3 340.5 C463.5 339.9 475.0 340.4 484.6 343.0 C494.2 345.6 502.1 354.2 509.7 356.0 C517.3 357.8 522.6 353.3 530.0 353.6 C537.4 353.9 547.4 357.5 554.0 358.0 C560.6 358.5 563.3 355.9 569.7 356.5 C576.1 357.1 584.5 359.2 592.3 361.4 C600.1 363.6 608.7 366.3 616.5 369.5 C624.3 372.7 635.4 378.9 639.2 380.8 L650 396 L730 396 L730 120 L340 120 L340 346.4 Z"/></clipPath>
<clipPath id="pl"><path d="M417.6 346.4 C423.4 345.4 441.1 341.1 452.3 340.5 C463.5 339.9 475.0 340.4 484.6 343.0 C494.2 345.6 502.1 354.2 509.7 356.0 C517.3 357.8 522.6 353.3 530.0 353.6 C537.4 353.9 547.4 357.5 554.0 358.0 C560.6 358.5 563.3 355.9 569.7 356.5 C576.1 357.1 584.5 359.2 592.3 361.4 C600.1 363.6 608.7 366.3 616.5 369.5 C624.3 372.7 635.4 378.9 639.2 380.8 L645 381 L645 430 L400 430 L400 346.4 Z"/></clipPath>
<filter id="bl8" x="-100%" y="-100%" width="300%" height="300%"><feGaussianBlur stdDeviation="10"/></filter>
<filter id="bl4" x="-100%" y="-100%" width="300%" height="300%"><feGaussianBlur stdDeviation="5"/></filter>
<filter id="rough" x="-5%" y="-5%" width="110%" height="110%"><feTurbulence type="fractalNoise" baseFrequency="0.35" numOctaves="1" seed="3"/><feDisplacementMap in="SourceGraphic" scale="2.5"/></filter>
</defs>
<path d="M353.5 256.0 C352.1 249.5 352.8 243.5 353.0 239.0 C353.2 234.5 352.8 233.4 355.0 229.0 C357.2 224.6 362.4 216.5 366.0 212.7 C369.6 208.9 373.5 209.1 376.5 206.2 C379.5 203.2 381.0 199.0 383.8 195.0 C386.6 191.0 389.2 186.3 393.5 182.0 C397.8 177.7 404.2 172.2 409.6 169.0 C415.0 165.8 418.8 164.3 425.8 162.6 C432.8 160.8 444.4 160.3 451.5 158.5 C458.6 156.7 460.8 154.1 468.5 151.8 C476.2 149.5 488.7 145.9 497.6 144.5 C506.5 143.1 514.7 143.1 521.8 143.3 C528.9 143.5 536.2 144.8 540.0 145.8 C543.8 146.8 541.9 147.2 544.5 149.4 C547.1 151.6 552.7 157.0 555.5 159.0 C558.3 161.0 557.7 161.5 561.5 161.5 C565.3 161.5 571.6 158.6 578.5 159.0 C585.4 159.4 595.0 161.6 602.7 164.0 C610.4 166.4 617.6 169.2 624.5 173.6 C631.4 178.0 638.8 184.9 644.0 190.6 C649.2 196.3 651.1 204.2 656.0 207.6 C660.9 211.0 667.8 208.5 673.6 211.0 C679.4 213.5 685.8 218.1 691.0 222.6 C696.2 227.1 700.8 232.8 704.6 238.0 C708.4 243.2 712.3 249.3 714.0 253.6 C715.7 257.9 716.0 260.4 715.0 264.0 C714.0 267.6 707.3 271.6 708.0 275.0 C708.7 278.4 716.3 279.3 719.0 284.5 C721.7 289.7 723.6 299.5 724.0 306.4 C724.4 313.3 723.2 320.1 721.5 325.8 C719.8 331.5 717.6 336.7 714.0 340.3 C710.4 343.9 702.9 344.0 699.7 347.6 C696.5 351.2 698.1 357.1 694.8 362.0 C691.5 366.9 686.5 372.6 680.0 376.7 C673.5 380.8 663.2 385.2 656.0 386.4 C648.8 387.6 641.5 382.4 636.7 384.0 C631.9 385.6 632.7 392.4 627.0 396.0 C621.3 399.6 610.8 403.6 602.7 405.8 C594.6 408.0 586.6 409.4 578.5 409.4 C570.4 409.4 562.1 408.4 554.0 405.8 C545.9 403.2 537.4 396.8 530.0 393.6 C522.6 390.4 516.7 387.6 509.7 386.4 C502.7 385.2 493.5 386.6 487.9 386.4 C482.2 386.2 481.4 386.4 475.8 385.2 C470.2 384.0 460.5 381.6 454.0 379.0 C447.5 376.4 441.9 373.4 437.0 369.4 C432.1 365.4 428.0 358.6 424.8 354.8 C421.6 351.0 423.7 348.8 417.6 346.4 C411.6 344.0 396.2 342.9 388.5 340.3 C380.8 337.7 375.8 333.8 371.5 330.6 C367.2 327.4 365.1 325.8 362.6 321.0 C360.1 316.2 357.0 308.0 356.3 302.0 C355.6 296.0 357.5 289.2 358.4 285.2 C359.3 281.2 362.3 282.8 361.5 277.9 C360.7 273.0 354.9 262.5 353.5 256.0Z" fill="#e8d4f4" filter="url(#bl4)" opacity="0.6"/>
<path d="M353.5 256.0 C352.1 249.5 352.8 243.5 353.0 239.0 C353.2 234.5 352.8 233.4 355.0 229.0 C357.2 224.6 362.4 216.5 366.0 212.7 C369.6 208.9 373.5 209.1 376.5 206.2 C379.5 203.2 381.0 199.0 383.8 195.0 C386.6 191.0 389.2 186.3 393.5 182.0 C397.8 177.7 404.2 172.2 409.6 169.0 C415.0 165.8 418.8 164.3 425.8 162.6 C432.8 160.8 444.4 160.3 451.5 158.5 C458.6 156.7 460.8 154.1 468.5 151.8 C476.2 149.5 488.7 145.9 497.6 144.5 C506.5 143.1 514.7 143.1 521.8 143.3 C528.9 143.5 536.2 144.8 540.0 145.8 C543.8 146.8 541.9 147.2 544.5 149.4 C547.1 151.6 552.7 157.0 555.5 159.0 C558.3 161.0 557.7 161.5 561.5 161.5 C565.3 161.5 571.6 158.6 578.5 159.0 C585.4 159.4 595.0 161.6 602.7 164.0 C610.4 166.4 617.6 169.2 624.5 173.6 C631.4 178.0 638.8 184.9 644.0 190.6 C649.2 196.3 651.1 204.2 656.0 207.6 C660.9 211.0 667.8 208.5 673.6 211.0 C679.4 213.5 685.8 218.1 691.0 222.6 C696.2 227.1 700.8 232.8 704.6 238.0 C708.4 243.2 712.3 249.3 714.0 253.6 C715.7 257.9 716.0 260.4 715.0 264.0 C714.0 267.6 707.3 271.6 708.0 275.0 C708.7 278.4 716.3 279.3 719.0 284.5 C721.7 289.7 723.6 299.5 724.0 306.4 C724.4 313.3 723.2 320.1 721.5 325.8 C719.8 331.5 717.6 336.7 714.0 340.3 C710.4 343.9 702.9 344.0 699.7 347.6 C696.5 351.2 698.1 357.1 694.8 362.0 C691.5 366.9 686.5 372.6 680.0 376.7 C673.5 380.8 663.2 385.2 656.0 386.4 C648.8 387.6 641.5 382.4 636.7 384.0 C631.9 385.6 632.7 392.4 627.0 396.0 C621.3 399.6 610.8 403.6 602.7 405.8 C594.6 408.0 586.6 409.4 578.5 409.4 C570.4 409.4 562.1 408.4 554.0 405.8 C545.9 403.2 537.4 396.8 530.0 393.6 C522.6 390.4 516.7 387.6 509.7 386.4 C502.7 385.2 493.5 386.6 487.9 386.4 C482.2 386.2 481.4 386.4 475.8 385.2 C470.2 384.0 460.5 381.6 454.0 379.0 C447.5 376.4 441.9 373.4 437.0 369.4 C432.1 365.4 428.0 358.6 424.8 354.8 C421.6 351.0 423.7 348.8 417.6 346.4 C411.6 344.0 396.2 342.9 388.5 340.3 C380.8 337.7 375.8 333.8 371.5 330.6 C367.2 327.4 365.1 325.8 362.6 321.0 C360.1 316.2 357.0 308.0 356.3 302.0 C355.6 296.0 357.5 289.2 358.4 285.2 C359.3 281.2 362.3 282.8 361.5 277.9 C360.7 273.0 354.9 262.5 353.5 256.0Z" fill="#dc7cf0"/>
<g clip-path="url(#pc)"><g clip-path="url(#pu)">
<ellipse cx="430" cy="175" rx="40" ry="12" transform="rotate(-25 430 175)" fill="#f08af0" opacity="1.00" filter="url(#bl8)"/>
<ellipse cx="505" cy="158" rx="40" ry="10" transform="rotate(0 505 158)" fill="#f090f0" opacity="1.00" filter="url(#bl8)"/>
<ellipse cx="600" cy="178" rx="36" ry="12" transform="rotate(20 600 178)" fill="#f094f2" opacity="1.00" filter="url(#bl8)"/>
<ellipse cx="690" cy="250" rx="12" ry="26" transform="rotate(-30 690 250)" fill="#ea9af2" opacity="1.00" filter="url(#bl8)"/>
<ellipse cx="712" cy="315" rx="8" ry="24" transform="rotate(0 712 315)" fill="#e0a0f2" opacity="0.90" filter="url(#bl8)"/>
<ellipse cx="368" cy="245" rx="10" ry="26" transform="rotate(0 368 245)" fill="#e890f0" opacity="0.80" filter="url(#bl8)"/>
<ellipse cx="395" cy="305" rx="56" ry="34" transform="rotate(15 395 305)" fill="#c064f0" opacity="1.00" filter="url(#bl8)"/>
<ellipse cx="375" cy="290" rx="20" ry="30" transform="rotate(0 375 290)" fill="#bc66f0" opacity="1.00" filter="url(#bl8)"/>
<ellipse cx="432" cy="235" rx="38" ry="32" transform="rotate(40 432 235)" fill="#cc62f0" opacity="1.00" filter="url(#bl8)"/>
<ellipse cx="525" cy="232" rx="28" ry="54" transform="rotate(-5 525 232)" fill="#cc62f0" opacity="1.00" filter="url(#bl8)"/>
<ellipse cx="598" cy="240" rx="30" ry="48" transform="rotate(25 598 240)" fill="#c45cf0" opacity="1.00" filter="url(#bl8)"/>
<ellipse cx="652" cy="268" rx="34" ry="24" transform="rotate(40 652 268)" fill="#cc62f0" opacity="1.00" filter="url(#bl8)"/>
<ellipse cx="682" cy="312" rx="28" ry="22" transform="rotate(0 682 312)" fill="#cc66f0" opacity="1.00" filter="url(#bl8)"/>
<ellipse cx="650" cy="362" rx="40" ry="16" transform="rotate(10 650 362)" fill="#cc5cf0" opacity="1.00" filter="url(#bl8)"/>
<ellipse cx="462" cy="315" rx="32" ry="16" transform="rotate(35 462 315)" fill="#f04ae0" opacity="1.00" filter="url(#bl8)"/>
<ellipse cx="470" cy="280" rx="10" ry="26" transform="rotate(-30 470 280)" fill="#f058e4" opacity="1.00" filter="url(#bl8)"/>
<ellipse cx="612" cy="322" rx="40" ry="14" transform="rotate(-15 612 322)" fill="#f050e0" opacity="1.00" filter="url(#bl8)"/>
<ellipse cx="585" cy="300" rx="10" ry="24" transform="rotate(45 585 300)" fill="#f060e4" opacity="1.00" filter="url(#bl8)"/>
<ellipse cx="497" cy="290" rx="10" ry="30" transform="rotate(-10 497 290)" fill="#f060e4" opacity="1.00" filter="url(#bl8)"/>
<ellipse cx="560" cy="300" rx="12" ry="30" transform="rotate(30 560 300)" fill="#f070e8" opacity="1.00" filter="url(#bl8)"/>
<ellipse cx="522" cy="340" rx="42" ry="16" fill="#f6cef6" filter="url(#bl8)"/>
<ellipse cx="525" cy="295" rx="13" ry="42" fill="#f2b4f2" filter="url(#bl8)"/>
<ellipse cx="455" cy="290" rx="5" ry="30" transform="rotate(-40 455 290)" fill="#f4a8f0" filter="url(#bl4)" opacity="0.8"/>
<ellipse cx="590" cy="325" rx="5" ry="26" transform="rotate(58 590 325)" fill="#f4a8f0" filter="url(#bl4)" opacity="0.8"/>
<ellipse cx="515" cy="340" rx="20" ry="10" fill="#fae0fa" filter="url(#bl4)"/>
</g><g clip-path="url(#pl)">
<rect x="400" y="340" width="250" height="90" fill="#c858f0"/>
<ellipse cx="450" cy="372" rx="40" ry="16" transform="rotate(10 450 372)" fill="#bc5cf0" opacity="1.00" filter="url(#bl8)"/>
<ellipse cx="500" cy="372" rx="26" ry="12" transform="rotate(0 500 372)" fill="#dc40f0" opacity="1.00" filter="url(#bl8)"/>
<ellipse cx="575" cy="392" rx="50" ry="16" transform="rotate(0 575 392)" fill="#c850f0" opacity="1.00" filter="url(#bl8)"/>
<ellipse cx="555" cy="382" rx="24" ry="9" transform="rotate(0 555 382)" fill="#dc44f0" opacity="1.00" filter="url(#bl8)"/>
<ellipse cx="625" cy="380" rx="22" ry="10" transform="rotate(30 625 380)" fill="#c060f0" opacity="1.00" filter="url(#bl8)"/>
</g></g>
<path d="M451.5 159.0 C454.8 165.1 464.9 182.8 471.0 195.8 C477.1 208.8 483.3 222.6 488.0 237.0 C492.7 251.4 496.8 268.3 499.2 282.3 C501.6 296.3 501.9 314.6 502.4 321.0" fill="none" stroke="#5a0e78" stroke-width="2" stroke-dasharray="7 1"/>
<path d="M378.5 205.0 C386.5 212.5 414.2 237.9 426.5 250.0 C438.8 262.1 444.5 269.4 452.3 277.5 C460.1 285.6 467.4 291.8 473.3 298.5 C479.2 305.2 484.4 312.0 487.9 317.9 C491.4 323.8 493.2 331.3 494.3 334.0" fill="none" stroke="#5a0e78" stroke-width="2" stroke-dasharray="7 1"/>
<path d="M376.5 207.5 C384.3 214.8 413.3 241.5 423.2 251.6 C433.1 261.6 430.6 261.3 436.0 267.8 C441.4 274.3 449.6 283.1 455.5 290.4 C461.4 297.7 466.8 303.6 471.7 311.4 C476.6 319.2 482.5 332.9 484.6 337.2" fill="none" stroke="#5a0e78" stroke-width="2" stroke-dasharray="7 1"/>
<path d="M361.5 277.9 C364.1 277.7 368.4 275.6 377.0 276.8 C385.6 278.0 401.8 281.7 413.0 285.2 C424.2 288.7 435.4 292.9 444.5 297.8 C453.6 302.7 461.5 308.6 467.6 314.6 C473.8 320.6 479.1 330.8 481.4 334.0" fill="none" stroke="#5a0e78" stroke-width="2" stroke-dasharray="7 1"/>
<path d="M556.5 163.0 C555.2 168.9 551.9 184.0 548.5 198.5 C545.1 213.0 540.3 236.0 536.3 250.0 C532.2 264.0 528.9 270.7 524.2 282.3 C519.5 293.9 510.7 313.3 508.0 319.5" fill="none" stroke="#5a0e78" stroke-width="2" stroke-dasharray="7 1"/>
<path d="M558.2 163.0 C557.7 168.9 556.4 184.0 555.0 198.5 C553.6 213.0 551.1 234.7 550.0 250.0 C548.9 265.3 549.7 275.7 548.5 290.4 C547.3 305.1 543.8 330.1 542.8 338.0" fill="none" stroke="#5a0e78" stroke-width="2" stroke-dasharray="7 1"/>
<path d="M656.0 213.0 C653.1 215.2 644.9 221.3 638.8 226.5 C632.7 231.7 625.9 238.2 619.4 244.0 C612.9 249.8 606.4 254.2 600.0 261.4 C593.6 268.6 587.1 278.0 580.8 287.0 C574.5 296.0 565.3 310.7 562.2 315.4" fill="none" stroke="#5a0e78" stroke-width="2" stroke-dasharray="7 1"/>
<path d="M708.4 274.8 C703.5 275.5 688.5 277.2 679.0 279.0 C669.5 280.8 660.5 282.5 651.7 285.3 C643.0 288.1 635.1 292.0 626.5 295.8 C617.9 299.6 608.4 303.5 600.0 308.0 C591.6 312.5 584.0 317.5 576.0 322.6 C568.0 327.8 555.8 336.2 551.7 338.9" fill="none" stroke="#5a0e78" stroke-width="2" stroke-dasharray="7 1"/>
<path d="M611.8 304.2 C609.0 305.6 600.2 308.2 595.0 312.6 C589.8 317.0 585.9 324.8 580.8 330.8 C575.7 336.8 567.3 345.6 564.6 348.5" fill="none" stroke="#5a0e78" stroke-width="2" stroke-dasharray="7 1"/>
<path d="M697.3 342.8 C693.2 341.6 682.4 336.9 673.0 335.5 C663.6 334.1 651.5 334.1 640.8 334.7 C630.0 335.2 618.5 336.8 608.5 338.8 C598.5 340.8 587.5 344.4 581.0 346.8 C574.5 349.2 571.6 352.2 569.7 353.3" fill="none" stroke="#5a0e78" stroke-width="2" stroke-dasharray="7 1"/>
<path d="M531.0 357.0 C531.3 362.8 532.7 386.2 533.0 392.0" fill="none" stroke="#5a0e78" stroke-width="2" stroke-dasharray="7 1"/>
<path d="M573.0 359.0 C577.6 360.8 591.3 364.2 600.4 369.5 C609.5 374.8 623.2 387.0 627.8 390.5" fill="none" stroke="#5a0e78" stroke-width="2" stroke-dasharray="7 1"/>
<path d="M417.6 346.4 C423.4 345.4 441.1 341.1 452.3 340.5 C463.5 339.9 475.0 340.4 484.6 343.0 C494.2 345.6 502.1 354.2 509.7 356.0 C517.3 357.8 522.6 353.3 530.0 353.6 C537.4 353.9 547.4 357.5 554.0 358.0 C560.6 358.5 563.3 355.9 569.7 356.5 C576.1 357.1 584.5 359.2 592.3 361.4 C600.1 363.6 608.7 366.3 616.5 369.5 C624.3 372.7 635.4 378.9 639.2 380.8" fill="none" stroke="#560a70" stroke-width="2.4"/>
<path d="M420.0 350.0 C425.3 349.3 441.1 346.3 452.0 346.0 C462.9 345.7 479.9 347.7 485.5 348.0" fill="none" stroke="#5a0e78" stroke-width="2" stroke-dasharray="7 1"/>
<path d="M353.5 256.0 C352.1 249.5 352.8 243.5 353.0 239.0 C353.2 234.5 352.8 233.4 355.0 229.0 C357.2 224.6 362.4 216.5 366.0 212.7 C369.6 208.9 373.5 209.1 376.5 206.2 C379.5 203.2 381.0 199.0 383.8 195.0 C386.6 191.0 389.2 186.3 393.5 182.0 C397.8 177.7 404.2 172.2 409.6 169.0 C415.0 165.8 418.8 164.3 425.8 162.6 C432.8 160.8 444.4 160.3 451.5 158.5 C458.6 156.7 460.8 154.1 468.5 151.8 C476.2 149.5 488.7 145.9 497.6 144.5 C506.5 143.1 514.7 143.1 521.8 143.3 C528.9 143.5 536.2 144.8 540.0 145.8 C543.8 146.8 541.9 147.2 544.5 149.4 C547.1 151.6 552.7 157.0 555.5 159.0 C558.3 161.0 557.7 161.5 561.5 161.5 C565.3 161.5 571.6 158.6 578.5 159.0 C585.4 159.4 595.0 161.6 602.7 164.0 C610.4 166.4 617.6 169.2 624.5 173.6 C631.4 178.0 638.8 184.9 644.0 190.6 C649.2 196.3 651.1 204.2 656.0 207.6 C660.9 211.0 667.8 208.5 673.6 211.0 C679.4 213.5 685.8 218.1 691.0 222.6 C696.2 227.1 700.8 232.8 704.6 238.0 C708.4 243.2 712.3 249.3 714.0 253.6 C715.7 257.9 716.0 260.4 715.0 264.0 C714.0 267.6 707.3 271.6 708.0 275.0 C708.7 278.4 716.3 279.3 719.0 284.5 C721.7 289.7 723.6 299.5 724.0 306.4 C724.4 313.3 723.2 320.1 721.5 325.8 C719.8 331.5 717.6 336.7 714.0 340.3 C710.4 343.9 702.9 344.0 699.7 347.6 C696.5 351.2 698.1 357.1 694.8 362.0 C691.5 366.9 686.5 372.6 680.0 376.7 C673.5 380.8 663.2 385.2 656.0 386.4 C648.8 387.6 641.5 382.4 636.7 384.0 C631.9 385.6 632.7 392.4 627.0 396.0 C621.3 399.6 610.8 403.6 602.7 405.8 C594.6 408.0 586.6 409.4 578.5 409.4 C570.4 409.4 562.1 408.4 554.0 405.8 C545.9 403.2 537.4 396.8 530.0 393.6 C522.6 390.4 516.7 387.6 509.7 386.4 C502.7 385.2 493.5 386.6 487.9 386.4 C482.2 386.2 481.4 386.4 475.8 385.2 C470.2 384.0 460.5 381.6 454.0 379.0 C447.5 376.4 441.9 373.4 437.0 369.4 C432.1 365.4 428.0 358.6 424.8 354.8 C421.6 351.0 423.7 348.8 417.6 346.4 C411.6 344.0 396.2 342.9 388.5 340.3 C380.8 337.7 375.8 333.8 371.5 330.6 C367.2 327.4 365.1 325.8 362.6 321.0 C360.1 316.2 357.0 308.0 356.3 302.0 C355.6 296.0 357.5 289.2 358.4 285.2 C359.3 281.2 362.3 282.8 361.5 277.9 C360.7 273.0 354.9 262.5 353.5 256.0Z" fill="none" stroke="#580878" stroke-width="4" stroke-linejoin="round" filter="url(#rough)"/><defs><linearGradient id="lg1" x1="0" y1="0" x2="1" y2="1"><stop offset="0" stop-color="#b0dc90"/><stop offset="0.5" stop-color="#66b450"/><stop offset="1" stop-color="#2a8626"/></linearGradient>
<linearGradient id="lg2" x1="0" y1="0" x2="0" y2="1"><stop offset="0" stop-color="#a4d484"/><stop offset="1" stop-color="#3a9832"/></linearGradient></defs>
<path d="M456.4 521.7 C459.4 520.2 465.7 520.8 470.0 520.0 C474.3 519.2 479.3 514.5 482.0 517.0 C484.7 519.5 488.0 531.5 486.0 535.0 C484.0 538.5 475.0 537.7 470.0 538.0 C465.0 538.3 459.0 538.5 456.0 537.0 C453.0 535.5 451.9 531.5 452.0 529.0 C452.1 526.5 453.4 523.2 456.4 521.7Z" fill="#3e9a34" stroke="#0a5a10" stroke-width="4" stroke-linejoin="round"/>
<path d="M473.2 466.7 C474.9 465.5 482.7 476.9 486.0 483.0 C489.3 489.1 491.5 496.8 493.0 503.3 C494.5 509.8 496.0 516.4 495.0 522.0 C494.0 527.6 489.5 537.3 487.0 537.0 C484.5 536.7 481.8 527.8 480.0 520.0 C478.2 512.2 477.1 498.9 476.0 490.0 C474.9 481.1 471.5 467.9 473.2 466.7Z" fill="#4aa23c" stroke="#0a5a10" stroke-width="4" stroke-linejoin="round"/>
<path d="M509.0 519.0 C510.3 514.5 515.8 512.5 522.5 507.5 C529.2 502.5 538.9 493.5 549.5 489.0 C560.1 484.5 585.0 479.1 586.2 480.4 C587.5 481.7 567.0 489.9 557.0 497.0 C547.0 504.1 533.3 516.8 526.3 523.0 C519.3 529.2 517.7 535.2 514.8 534.5 C511.9 533.8 507.7 523.5 509.0 519.0Z" fill="#56aa44" stroke="#0a5a10" stroke-width="4" stroke-linejoin="round"/>
<path d="M430.4 492.6 C433.9 491.6 440.2 497.4 444.0 503.3 C447.8 509.2 449.0 519.7 453.3 527.8 C457.6 535.9 466.9 543.9 470.0 552.0 C473.1 560.1 469.6 568.5 471.7 576.7 C473.8 584.9 479.8 595.0 482.4 601.0 C484.9 607.0 488.8 612.5 487.0 613.0 C485.2 613.5 477.8 610.0 471.7 604.0 C465.6 598.0 455.1 582.8 450.3 576.7 C445.5 570.6 446.4 575.1 442.6 567.5 C438.8 559.9 430.7 540.5 427.4 530.8 C424.1 521.1 422.3 515.8 422.8 509.4 C423.3 503.0 426.9 493.6 430.4 492.6Z" fill="url(#lg1)" stroke="#0a5a10" stroke-width="4" stroke-linejoin="round"/>
<path d="M486 536 L484 619" stroke="#0e5e16" stroke-width="3.6" fill="none"/>
<path d="M487.0 531.0 C489.7 527.5 495.4 525.3 500.0 524.0 C504.6 522.7 511.6 521.2 514.8 523.0 C518.0 524.8 519.1 528.3 519.0 534.5 C518.9 540.7 516.8 550.8 514.0 560.0 C511.2 569.2 505.5 581.3 502.2 590.0 C498.9 598.7 496.0 607.2 494.0 612.0 C492.0 616.8 491.3 621.0 490.0 619.0 C488.7 617.0 487.0 608.2 486.0 600.0 C485.0 591.8 484.3 579.2 484.0 570.0 C483.7 560.8 483.5 551.5 484.0 545.0 C484.5 538.5 484.3 534.5 487.0 531.0Z" fill="url(#lg2)" stroke="#0a5a10" stroke-width="4" stroke-linejoin="round"/><polyline points="500,520 496,503 481,460.6 459.4,445.3 416.7,466.7 386,521.7 389,534 428.9,619" fill="none" stroke="#000" stroke-width="1.2" stroke-dasharray="3.5 2"/>
<polyline points="514.8,511.3 530.2,492 568.8,470.8 609.4,451.5 638.4,484.3 624.8,523 576.6,561.5 530.2,604 522,619" fill="none" stroke="#000" stroke-width="1.2" stroke-dasharray="3.5 2"/><polygon points="55.20,111.38 358.72,355.63 360.55,353.38 365.30,363.40 354.51,360.84 356.33,358.59 54.20,112.62" fill="#e41e18"/>
</g>

</svg>
</body></html>
